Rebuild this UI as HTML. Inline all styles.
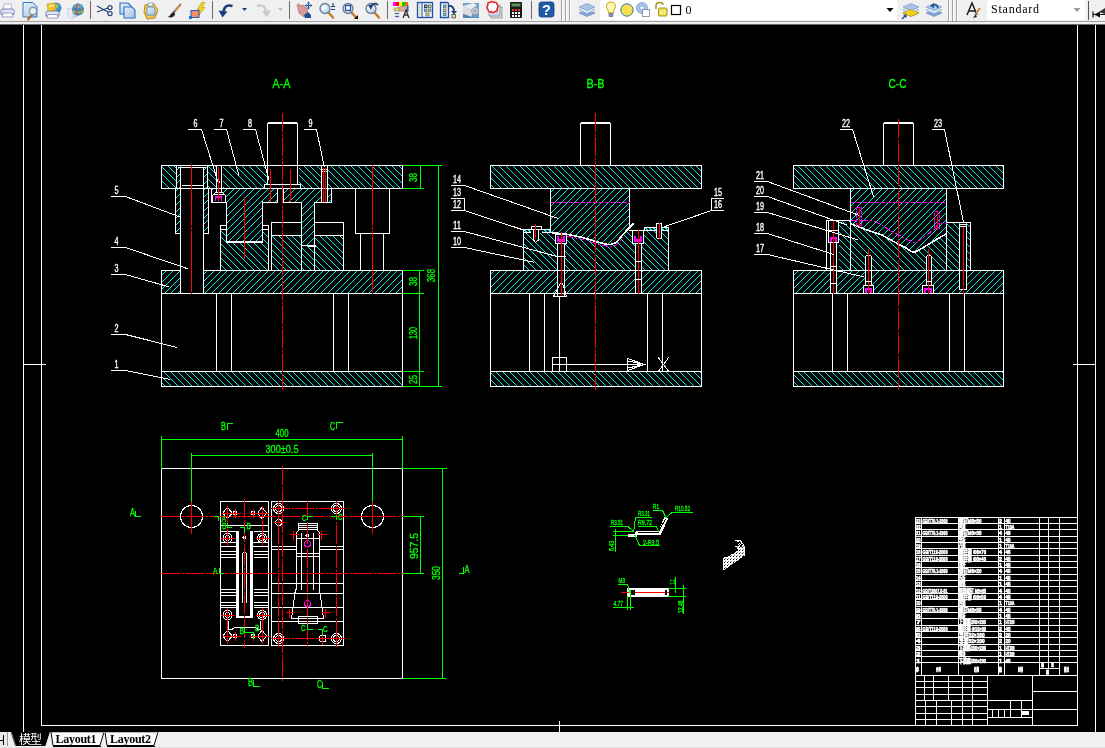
<!DOCTYPE html>
<html><head><meta charset="utf-8"><title>CAD</title>
<style>
html,body{margin:0;padding:0;background:#000;overflow:hidden}
body{width:1105px;height:748px;position:relative;font-family:"Liberation Sans","Noto Sans CJK SC",sans-serif}
#tb{position:absolute;left:0;top:0;width:1105px;height:25px;background:#f0f0f0;overflow:hidden}
#tb .l1{position:absolute;left:0;top:21px;width:1105px;height:1px;background:#a0a0a0}
#tb .l2{position:absolute;left:0;top:24px;width:1105px;height:1px;background:#6e6e6e}
#tb svg{position:absolute;left:0;top:0;will-change:transform}
#tabs{position:absolute;left:0;top:732px;width:1105px;height:16px;background:#f0f0f0;overflow:hidden}
#tabs svg{position:absolute;left:0;top:0;will-change:transform}
svg.cad{position:absolute;left:0;top:0;will-change:transform}
.cad path,.cad circle{fill:none;stroke-width:1;shape-rendering:crispEdges}
.cad .w{stroke:#fff}.cad .r{stroke:#f00}.cad .g{stroke:#0f0}.cad .c{stroke:#0ff;stroke-width:.92}.cad .m{stroke:#f0f}
.cad .w2{stroke:#fff;stroke-width:2}.cad .w15{stroke:#fff;stroke-width:1.6}
.cad .rd{stroke:#f00;stroke-dasharray:19 2 2 1}.cad .rp{stroke:#f00;stroke-dasharray:61 1 3 1}.cad .rs{stroke:#f00;stroke-dasharray:22 2 3 2}
.cad .md{stroke:#f0f;stroke-dasharray:6 2 2 2}.cad .mh{stroke:#f0f;stroke-dasharray:4 2}.cad .mp{stroke:#f0f;stroke-dasharray:3 1}
.cad text{font-family:"Liberation Sans",sans-serif}
.cad .tw{fill:#fff;stroke:#fff;stroke-width:.35}.cad .tg{fill:#0f0;stroke:#0f0;stroke-width:.35}
.cad .tb{font-weight:bold;stroke-width:.6;font-family:"Liberation Sans","Noto Sans CJK SC",sans-serif}
.ser{font-family:"Liberation Serif","Noto Serif CJK SC",serif}
</style></head>
<body>
<svg class="cad" width="1105" height="748" viewBox="0 0 1105 748"><defs><path id="hf" class="c" d="M-761.6 0l-748 748M-754.8 0l-748 748M-748 0l-748 748M-741.2 0l-748 748M-734.4 0l-748 748M-727.6 0l-748 748M-720.8 0l-748 748M-714 0l-748 748M-707.2 0l-748 748M-700.4 0l-748 748M-693.6 0l-748 748M-686.8 0l-748 748M-680 0l-748 748M-673.2 0l-748 748M-666.4 0l-748 748M-659.6 0l-748 748M-652.8 0l-748 748M-646 0l-748 748M-639.2 0l-748 748M-632.4 0l-748 748M-625.6 0l-748 748M-618.8 0l-748 748M-612 0l-748 748M-605.2 0l-748 748M-598.4 0l-748 748M-591.6 0l-748 748M-584.8 0l-748 748M-578 0l-748 748M-571.2 0l-748 748M-564.4 0l-748 748M-557.6 0l-748 748M-550.8 0l-748 748M-544 0l-748 748M-537.2 0l-748 748M-530.4 0l-748 748M-523.6 0l-748 748M-516.8 0l-748 748M-510 0l-748 748M-503.2 0l-748 748M-496.4 0l-748 748M-489.6 0l-748 748M-482.8 0l-748 748M-476 0l-748 748M-469.2 0l-748 748M-462.4 0l-748 748M-455.6 0l-748 748M-448.8 0l-748 748M-442 0l-748 748M-435.2 0l-748 748M-428.4 0l-748 748M-421.6 0l-748 748M-414.8 0l-748 748M-408 0l-748 748M-401.2 0l-748 748M-394.4 0l-748 748M-387.6 0l-748 748M-380.8 0l-748 748M-374 0l-748 748M-367.2 0l-748 748M-360.4 0l-748 748M-353.6 0l-748 748M-346.8 0l-748 748M-340 0l-748 748M-333.2 0l-748 748M-326.4 0l-748 748M-319.6 0l-748 748M-312.8 0l-748 748M-306 0l-748 748M-299.2 0l-748 748M-292.4 0l-748 748M-285.6 0l-748 748M-278.8 0l-748 748M-272 0l-748 748M-265.2 0l-748 748M-258.4 0l-748 748M-251.6 0l-748 748M-244.8 0l-748 748M-238 0l-748 748M-231.2 0l-748 748M-224.4 0l-748 748M-217.6 0l-748 748M-210.8 0l-748 748M-204 0l-748 748M-197.2 0l-748 748M-190.4 0l-748 748M-183.6 0l-748 748M-176.8 0l-748 748M-170 0l-748 748M-163.2 0l-748 748M-156.4 0l-748 748M-149.6 0l-748 748M-142.8 0l-748 748M-136 0l-748 748M-129.2 0l-748 748M-122.4 0l-748 748M-115.6 0l-748 748M-108.8 0l-748 748M-102 0l-748 748M-95.2 0l-748 748M-88.4 0l-748 748M-81.6 0l-748 748M-74.8 0l-748 748M-68 0l-748 748M-61.2 0l-748 748M-54.4 0l-748 748M-47.6 0l-748 748M-40.8 0l-748 748M-34 0l-748 748M-27.2 0l-748 748M-20.4 0l-748 748M-13.6 0l-748 748M-6.8 0l-748 748M-0 0l-748 748M6.8 0l-748 748M13.6 0l-748 748M20.4 0l-748 748M27.2 0l-748 748M34 0l-748 748M40.8 0l-748 748M47.6 0l-748 748M54.4 0l-748 748M61.2 0l-748 748M68 0l-748 748M74.8 0l-748 748M81.6 0l-748 748M88.4 0l-748 748M95.2 0l-748 748M102 0l-748 748M108.8 0l-748 748M115.6 0l-748 748M122.4 0l-748 748M129.2 0l-748 748M136 0l-748 748M142.8 0l-748 748M149.6 0l-748 748M156.4 0l-748 748M163.2 0l-748 748M170 0l-748 748M176.8 0l-748 748M183.6 0l-748 748M190.4 0l-748 748M197.2 0l-748 748M204 0l-748 748M210.8 0l-748 748M217.6 0l-748 748M224.4 0l-748 748M231.2 0l-748 748M238 0l-748 748M244.8 0l-748 748M251.6 0l-748 748M258.4 0l-748 748M265.2 0l-748 748M272 0l-748 748M278.8 0l-748 748M285.6 0l-748 748M292.4 0l-748 748M299.2 0l-748 748M306 0l-748 748M312.8 0l-748 748M319.6 0l-748 748M326.4 0l-748 748M333.2 0l-748 748M340 0l-748 748M346.8 0l-748 748M353.6 0l-748 748M360.4 0l-748 748M367.2 0l-748 748M374 0l-748 748M380.8 0l-748 748M387.6 0l-748 748M394.4 0l-748 748M401.2 0l-748 748M408 0l-748 748M414.8 0l-748 748M421.6 0l-748 748M428.4 0l-748 748M435.2 0l-748 748M442 0l-748 748M448.8 0l-748 748M455.6 0l-748 748M462.4 0l-748 748M469.2 0l-748 748M476 0l-748 748M482.8 0l-748 748M489.6 0l-748 748M496.4 0l-748 748M503.2 0l-748 748M510 0l-748 748M516.8 0l-748 748M523.6 0l-748 748M530.4 0l-748 748M537.2 0l-748 748M544 0l-748 748M550.8 0l-748 748M557.6 0l-748 748M564.4 0l-748 748M571.2 0l-748 748M578 0l-748 748M584.8 0l-748 748M591.6 0l-748 748M598.4 0l-748 748M605.2 0l-748 748M612 0l-748 748M618.8 0l-748 748M625.6 0l-748 748M632.4 0l-748 748M639.2 0l-748 748M646 0l-748 748M652.8 0l-748 748M659.6 0l-748 748M666.4 0l-748 748M673.2 0l-748 748M680 0l-748 748M686.8 0l-748 748M693.6 0l-748 748M700.4 0l-748 748M707.2 0l-748 748M714 0l-748 748M720.8 0l-748 748M727.6 0l-748 748M734.4 0l-748 748M741.2 0l-748 748M748 0l-748 748M754.8 0l-748 748M761.6 0l-748 748M768.4 0l-748 748M775.2 0l-748 748M782 0l-748 748M788.8 0l-748 748M795.6 0l-748 748M802.4 0l-748 748M809.2 0l-748 748M816 0l-748 748M822.8 0l-748 748M829.6 0l-748 748M836.4 0l-748 748M843.2 0l-748 748M850 0l-748 748M856.8 0l-748 748M863.6 0l-748 748M870.4 0l-748 748M877.2 0l-748 748M884 0l-748 748M890.8 0l-748 748M897.6 0l-748 748M904.4 0l-748 748M911.2 0l-748 748M918 0l-748 748M924.8 0l-748 748M931.6 0l-748 748M938.4 0l-748 748M945.2 0l-748 748M952 0l-748 748M958.8 0l-748 748M965.6 0l-748 748M972.4 0l-748 748M979.2 0l-748 748M986 0l-748 748M992.8 0l-748 748M999.6 0l-748 748M1006.4 0l-748 748M1013.2 0l-748 748M1020 0l-748 748M1026.8 0l-748 748M1033.6 0l-748 748M1040.4 0l-748 748M1047.2 0l-748 748M1054 0l-748 748M1060.8 0l-748 748M1067.6 0l-748 748M1074.4 0l-748 748M1081.2 0l-748 748M1088 0l-748 748M1094.8 0l-748 748M1101.6 0l-748 748M1108.4 0l-748 748M1115.2 0l-748 748M1122 0l-748 748M1128.8 0l-748 748M1135.6 0l-748 748M1142.4 0l-748 748M1149.2 0l-748 748M1156 0l-748 748M1162.8 0l-748 748M1169.6 0l-748 748M1176.4 0l-748 748M1183.2 0l-748 748M1190 0l-748 748M1196.8 0l-748 748M1203.6 0l-748 748M1210.4 0l-748 748M1217.2 0l-748 748M1224 0l-748 748M1230.8 0l-748 748M1237.6 0l-748 748M1244.4 0l-748 748M1251.2 0l-748 748M1258 0l-748 748M1264.8 0l-748 748M1271.6 0l-748 748M1278.4 0l-748 748M1285.2 0l-748 748M1292 0l-748 748M1298.8 0l-748 748M1305.6 0l-748 748M1312.4 0l-748 748M1319.2 0l-748 748M1326 0l-748 748M1332.8 0l-748 748M1339.6 0l-748 748M1346.4 0l-748 748M1353.2 0l-748 748M1360 0l-748 748M1366.8 0l-748 748M1373.6 0l-748 748M1380.4 0l-748 748M1387.2 0l-748 748M1394 0l-748 748M1400.8 0l-748 748M1407.6 0l-748 748M1414.4 0l-748 748M1421.2 0l-748 748M1428 0l-748 748M1434.8 0l-748 748M1441.6 0l-748 748M1448.4 0l-748 748M1455.2 0l-748 748M1462 0l-748 748M1468.8 0l-748 748M1475.6 0l-748 748M1482.4 0l-748 748M1489.2 0l-748 748M1496 0l-748 748M1502.8 0l-748 748M1509.6 0l-748 748M1516.4 0l-748 748M1523.2 0l-748 748M1530 0l-748 748M1536.8 0l-748 748M1543.6 0l-748 748M1550.4 0l-748 748M1557.2 0l-748 748M1564 0l-748 748M1570.8 0l-748 748M1577.6 0l-748 748M1584.4 0l-748 748M1591.2 0l-748 748M1598 0l-748 748M1604.8 0l-748 748M1611.6 0l-748 748M1618.4 0l-748 748M1625.2 0l-748 748M1632 0l-748 748M1638.8 0l-748 748M1645.6 0l-748 748M1652.4 0l-748 748M1659.2 0l-748 748M1666 0l-748 748M1672.8 0l-748 748M1679.6 0l-748 748M1686.4 0l-748 748M1693.2 0l-748 748M1700 0l-748 748M1706.8 0l-748 748M1713.6 0l-748 748M1720.4 0l-748 748M1727.2 0l-748 748M1734 0l-748 748M1740.8 0l-748 748M1747.6 0l-748 748M1754.4 0l-748 748M1761.2 0l-748 748M1768 0l-748 748M1774.8 0l-748 748M1781.6 0l-748 748M1788.4 0l-748 748M1795.2 0l-748 748M1802 0l-748 748M1808.8 0l-748 748M1815.6 0l-748 748M1822.4 0l-748 748M1829.2 0l-748 748M1836 0l-748 748M1842.8 0l-748 748M1849.6 0l-748 748M1856.4 0l-748 748"/><path id="hb" class="c" d="M-1509.6 0l748 748M-1502.8 0l748 748M-1496 0l748 748M-1489.2 0l748 748M-1482.4 0l748 748M-1475.6 0l748 748M-1468.8 0l748 748M-1462 0l748 748M-1455.2 0l748 748M-1448.4 0l748 748M-1441.6 0l748 748M-1434.8 0l748 748M-1428 0l748 748M-1421.2 0l748 748M-1414.4 0l748 748M-1407.6 0l748 748M-1400.8 0l748 748M-1394 0l748 748M-1387.2 0l748 748M-1380.4 0l748 748M-1373.6 0l748 748M-1366.8 0l748 748M-1360 0l748 748M-1353.2 0l748 748M-1346.4 0l748 748M-1339.6 0l748 748M-1332.8 0l748 748M-1326 0l748 748M-1319.2 0l748 748M-1312.4 0l748 748M-1305.6 0l748 748M-1298.8 0l748 748M-1292 0l748 748M-1285.2 0l748 748M-1278.4 0l748 748M-1271.6 0l748 748M-1264.8 0l748 748M-1258 0l748 748M-1251.2 0l748 748M-1244.4 0l748 748M-1237.6 0l748 748M-1230.8 0l748 748M-1224 0l748 748M-1217.2 0l748 748M-1210.4 0l748 748M-1203.6 0l748 748M-1196.8 0l748 748M-1190 0l748 748M-1183.2 0l748 748M-1176.4 0l748 748M-1169.6 0l748 748M-1162.8 0l748 748M-1156 0l748 748M-1149.2 0l748 748M-1142.4 0l748 748M-1135.6 0l748 748M-1128.8 0l748 748M-1122 0l748 748M-1115.2 0l748 748M-1108.4 0l748 748M-1101.6 0l748 748M-1094.8 0l748 748M-1088 0l748 748M-1081.2 0l748 748M-1074.4 0l748 748M-1067.6 0l748 748M-1060.8 0l748 748M-1054 0l748 748M-1047.2 0l748 748M-1040.4 0l748 748M-1033.6 0l748 748M-1026.8 0l748 748M-1020 0l748 748M-1013.2 0l748 748M-1006.4 0l748 748M-999.6 0l748 748M-992.8 0l748 748M-986 0l748 748M-979.2 0l748 748M-972.4 0l748 748M-965.6 0l748 748M-958.8 0l748 748M-952 0l748 748M-945.2 0l748 748M-938.4 0l748 748M-931.6 0l748 748M-924.8 0l748 748M-918 0l748 748M-911.2 0l748 748M-904.4 0l748 748M-897.6 0l748 748M-890.8 0l748 748M-884 0l748 748M-877.2 0l748 748M-870.4 0l748 748M-863.6 0l748 748M-856.8 0l748 748M-850 0l748 748M-843.2 0l748 748M-836.4 0l748 748M-829.6 0l748 748M-822.8 0l748 748M-816 0l748 748M-809.2 0l748 748M-802.4 0l748 748M-795.6 0l748 748M-788.8 0l748 748M-782 0l748 748M-775.2 0l748 748M-768.4 0l748 748M-761.6 0l748 748M-754.8 0l748 748M-748 0l748 748M-741.2 0l748 748M-734.4 0l748 748M-727.6 0l748 748M-720.8 0l748 748M-714 0l748 748M-707.2 0l748 748M-700.4 0l748 748M-693.6 0l748 748M-686.8 0l748 748M-680 0l748 748M-673.2 0l748 748M-666.4 0l748 748M-659.6 0l748 748M-652.8 0l748 748M-646 0l748 748M-639.2 0l748 748M-632.4 0l748 748M-625.6 0l748 748M-618.8 0l748 748M-612 0l748 748M-605.2 0l748 748M-598.4 0l748 748M-591.6 0l748 748M-584.8 0l748 748M-578 0l748 748M-571.2 0l748 748M-564.4 0l748 748M-557.6 0l748 748M-550.8 0l748 748M-544 0l748 748M-537.2 0l748 748M-530.4 0l748 748M-523.6 0l748 748M-516.8 0l748 748M-510 0l748 748M-503.2 0l748 748M-496.4 0l748 748M-489.6 0l748 748M-482.8 0l748 748M-476 0l748 748M-469.2 0l748 748M-462.4 0l748 748M-455.6 0l748 748M-448.8 0l748 748M-442 0l748 748M-435.2 0l748 748M-428.4 0l748 748M-421.6 0l748 748M-414.8 0l748 748M-408 0l748 748M-401.2 0l748 748M-394.4 0l748 748M-387.6 0l748 748M-380.8 0l748 748M-374 0l748 748M-367.2 0l748 748M-360.4 0l748 748M-353.6 0l748 748M-346.8 0l748 748M-340 0l748 748M-333.2 0l748 748M-326.4 0l748 748M-319.6 0l748 748M-312.8 0l748 748M-306 0l748 748M-299.2 0l748 748M-292.4 0l748 748M-285.6 0l748 748M-278.8 0l748 748M-272 0l748 748M-265.2 0l748 748M-258.4 0l748 748M-251.6 0l748 748M-244.8 0l748 748M-238 0l748 748M-231.2 0l748 748M-224.4 0l748 748M-217.6 0l748 748M-210.8 0l748 748M-204 0l748 748M-197.2 0l748 748M-190.4 0l748 748M-183.6 0l748 748M-176.8 0l748 748M-170 0l748 748M-163.2 0l748 748M-156.4 0l748 748M-149.6 0l748 748M-142.8 0l748 748M-136 0l748 748M-129.2 0l748 748M-122.4 0l748 748M-115.6 0l748 748M-108.8 0l748 748M-102 0l748 748M-95.2 0l748 748M-88.4 0l748 748M-81.6 0l748 748M-74.8 0l748 748M-68 0l748 748M-61.2 0l748 748M-54.4 0l748 748M-47.6 0l748 748M-40.8 0l748 748M-34 0l748 748M-27.2 0l748 748M-20.4 0l748 748M-13.6 0l748 748M-6.8 0l748 748M-0 0l748 748M6.8 0l748 748M13.6 0l748 748M20.4 0l748 748M27.2 0l748 748M34 0l748 748M40.8 0l748 748M47.6 0l748 748M54.4 0l748 748M61.2 0l748 748M68 0l748 748M74.8 0l748 748M81.6 0l748 748M88.4 0l748 748M95.2 0l748 748M102 0l748 748M108.8 0l748 748M115.6 0l748 748M122.4 0l748 748M129.2 0l748 748M136 0l748 748M142.8 0l748 748M149.6 0l748 748M156.4 0l748 748M163.2 0l748 748M170 0l748 748M176.8 0l748 748M183.6 0l748 748M190.4 0l748 748M197.2 0l748 748M204 0l748 748M210.8 0l748 748M217.6 0l748 748M224.4 0l748 748M231.2 0l748 748M238 0l748 748M244.8 0l748 748M251.6 0l748 748M258.4 0l748 748M265.2 0l748 748M272 0l748 748M278.8 0l748 748M285.6 0l748 748M292.4 0l748 748M299.2 0l748 748M306 0l748 748M312.8 0l748 748M319.6 0l748 748M326.4 0l748 748M333.2 0l748 748M340 0l748 748M346.8 0l748 748M353.6 0l748 748M360.4 0l748 748M367.2 0l748 748M374 0l748 748M380.8 0l748 748M387.6 0l748 748M394.4 0l748 748M401.2 0l748 748M408 0l748 748M414.8 0l748 748M421.6 0l748 748M428.4 0l748 748M435.2 0l748 748M442 0l748 748M448.8 0l748 748M455.6 0l748 748M462.4 0l748 748M469.2 0l748 748M476 0l748 748M482.8 0l748 748M489.6 0l748 748M496.4 0l748 748M503.2 0l748 748M510 0l748 748M516.8 0l748 748M523.6 0l748 748M530.4 0l748 748M537.2 0l748 748M544 0l748 748M550.8 0l748 748M557.6 0l748 748M564.4 0l748 748M571.2 0l748 748M578 0l748 748M584.8 0l748 748M591.6 0l748 748M598.4 0l748 748M605.2 0l748 748M612 0l748 748M618.8 0l748 748M625.6 0l748 748M632.4 0l748 748M639.2 0l748 748M646 0l748 748M652.8 0l748 748M659.6 0l748 748M666.4 0l748 748M673.2 0l748 748M680 0l748 748M686.8 0l748 748M693.6 0l748 748M700.4 0l748 748M707.2 0l748 748M714 0l748 748M720.8 0l748 748M727.6 0l748 748M734.4 0l748 748M741.2 0l748 748M748 0l748 748M754.8 0l748 748M761.6 0l748 748M768.4 0l748 748M775.2 0l748 748M782 0l748 748M788.8 0l748 748M795.6 0l748 748M802.4 0l748 748M809.2 0l748 748M816 0l748 748M822.8 0l748 748M829.6 0l748 748M836.4 0l748 748M843.2 0l748 748M850 0l748 748M856.8 0l748 748M863.6 0l748 748M870.4 0l748 748M877.2 0l748 748M884 0l748 748M890.8 0l748 748M897.6 0l748 748M904.4 0l748 748M911.2 0l748 748M918 0l748 748M924.8 0l748 748M931.6 0l748 748M938.4 0l748 748M945.2 0l748 748M952 0l748 748M958.8 0l748 748M965.6 0l748 748M972.4 0l748 748M979.2 0l748 748M986 0l748 748M992.8 0l748 748M999.6 0l748 748M1006.4 0l748 748M1013.2 0l748 748M1020 0l748 748M1026.8 0l748 748M1033.6 0l748 748M1040.4 0l748 748M1047.2 0l748 748M1054 0l748 748M1060.8 0l748 748M1067.6 0l748 748M1074.4 0l748 748M1081.2 0l748 748M1088 0l748 748M1094.8 0l748 748M1101.6 0l748 748M1108.4 0l748 748"/><clipPath id="c1"><path d="M161 165L403 165L403 189L161 189Z"/></clipPath><clipPath id="c2"><path d="M161 270L403 270L403 294L161 294Z"/></clipPath><clipPath id="c3"><path d="M161 371L403 371L403 387L161 387Z"/></clipPath><clipPath id="c4"><path d="M175 189L181 189L181 234L175 234Z"/></clipPath><clipPath id="c5"><path d="M204 189L208 189L208 234L204 234Z"/></clipPath><clipPath id="c6"><path d="M177 166L181 166L181 189L177 189Z"/></clipPath><clipPath id="c7"><path d="M204 166L208 166L208 189L204 189Z"/></clipPath><clipPath id="c8"><path d="M211 189L278 189L278 202L262 202L262 242L227 242L227 203L211 203Z"/></clipPath><clipPath id="c9"><path d="M283 189L331 189L331 202L315 202L315 245L301 245L301 202L283 202Z"/></clipPath><clipPath id="c10"><path d="M301 246L315 246L315 270L301 270Z"/></clipPath><clipPath id="c11"><path d="M272 236L301 236L301 270L272 270Z"/></clipPath><clipPath id="c12"><path d="M315 236L344 236L344 270L315 270Z"/></clipPath><clipPath id="c13"><path d="M220 229L227 229L227 242L262 242L262 229L269 229L269 270L220 270Z"/></clipPath><clipPath id="c14"><path d="M490 165L702 165L702 189L490 189Z"/></clipPath><clipPath id="c15"><path d="M490 270L702 270L702 294L490 294Z"/></clipPath><clipPath id="c16"><path d="M490 371L702 371L702 387L490 387Z"/></clipPath><clipPath id="c17"><path d="M550.5 189L630 189L630 227L627 230L621.8 236L618 240.5L615 243.2L611 244.3L607 244.3L596.7 241.8L590.4 239.8L580 236.8L567 234.3L550.5 232.5Z"/></clipPath><clipPath id="c18"><path d="M523.5 232.5L550.5 232.5L567 234.3L580 236.8L590.4 239.8L596.7 241.8L607 244.3L611 244.3L615 243.2L618 240.5L621.8 236L627 230L630 230.5L669 230.5L669 270L523.5 270Z"/></clipPath><clipPath id="c19"><path d="M793 165L1004 165L1004 189L793 189Z"/></clipPath><clipPath id="c20"><path d="M793 270L1004 270L1004 294L793 294Z"/></clipPath><clipPath id="c21"><path d="M793 371L1004 371L1004 387L793 387Z"/></clipPath><clipPath id="c22"><path d="M850.5 189L947 189L947 233.5L938 238.5L930 243.5L920.1 249.4L915 252.2L911 251.5L906 248L898.8 244.3L890 239.5L882 235.1L875 232.5L867 230.1L858 226.5L851 223.8L850.5 223.8Z"/></clipPath><clipPath id="c23"><path d="M839 220.5L850.5 220.5L851 223.8L858 226.5L867 230.1L875 232.5L882 235.1L890 239.5L898.8 244.3L906 248L911 251.5L915 252.2L920.1 249.4L930 243.5L938 238.5L947 233.5L947 222.5L970.5 222.5L970.5 270L839 270Z"/></clipPath><clipPath id="ciso"><path d="M723 558.3L723 569.5L724 570L744.6 555.6L744.6 546L741 540L735 540L739.7 546.2L735 546.5L738.5 550L727.4 557.1L724 557Z"/></clipPath><pattern id="dots" width="3" height="3" patternUnits="userSpaceOnUse"><rect x="1" y="1" width="1" height="1" fill="#000"/><rect x="2.5" y="0" width=".5" height="1" fill="#000"/></pattern></defs>
<path class="w" d="M23.5 25L23.5 732"/>
<path class="w" d="M41.5 25L41.5 726"/>
<path class="w" d="M1077.5 25L1077.5 726"/>
<path class="w" d="M1095.5 25L1095.5 732"/>
<path class="w" d="M41 725.5L1078 725.5"/>
<path class="w" d="M23 364.5L46 364.5"/>
<path class="w" d="M1073 364.5L1096 364.5"/>
<path class="w" d="M559.5 721L559.5 732"/>
<g clip-path="url(#c1)"><use href="#hb" transform="translate(1.5 0)"/></g>
<g clip-path="url(#c2)"><use href="#hf" transform="translate(2 0)"/></g>
<g clip-path="url(#c3)"><use href="#hb" transform="translate(3 0)"/></g>
<rect x="177" y="166" width="31" height="23" fill="#000"/>
<rect x="216" y="166" width="7" height="23" fill="#000"/>
<rect x="267" y="166" width="32" height="19" fill="#000"/>
<rect x="264" y="184" width="37" height="5" fill="#000"/>
<rect x="321" y="166" width="7" height="23" fill="#000"/>
<g clip-path="url(#c4)"><use href="#hf"/></g>
<g clip-path="url(#c5)"><use href="#hf"/></g>
<g clip-path="url(#c6)"><use href="#hf"/></g>
<g clip-path="url(#c7)"><use href="#hf"/></g>
<rect x="181" y="270" width="23" height="24" fill="#000"/>
<g clip-path="url(#c8)"><use href="#hf" transform="translate(1 0)"/></g>
<rect x="212" y="193" width="14" height="10" fill="#000"/>
<rect x="215" y="189" width="8" height="5" fill="#000"/>
<g clip-path="url(#c9)"><use href="#hf" transform="translate(1 0)"/></g>
<rect x="321" y="189" width="7" height="13" fill="#000"/>
<g clip-path="url(#c10)"><use href="#hb"/></g>
<g clip-path="url(#c11)"><use href="#hb" transform="translate(2 0)"/></g>
<g clip-path="url(#c12)"><use href="#hb" transform="translate(2 0)"/></g>
<g clip-path="url(#c13)"><use href="#hb" transform="translate(4 0)"/></g>
<path class="w" d="M161.5 165.5H402.5V188.5H161.5Z"/>
<path class="w" d="M180.5 270.5L161.5 270.5L161.5 293.5L402.5 293.5L402.5 270.5L203.5 270.5"/>
<path class="w" d="M161.5 293.5H402.5V386.5H161.5Z"/>
<path class="w" d="M161 371.5L403 371.5"/>
<path class="w" d="M216.5 293L216.5 372"/>
<path class="w" d="M231.5 293L231.5 372"/>
<path class="w" d="M333.5 293L333.5 372"/>
<path class="w" d="M348.5 293L348.5 372"/>
<path class="w" d="M267.5 165L267.5 123.5L268.5 122.5L296.5 122.5L297.5 123.5L297.5 184"/>
<path class="w" d="M268 123.5L298 123.5"/>
<path class="w" d="M267.5 165L267.5 185"/>
<path class="w" d="M297.5 165L297.5 185"/>
<path class="w" d="M264.5 184.5H300.5V188.5H264.5Z"/>
<path class="w" d="M176.5 166L176.5 189"/>
<path class="w" d="M207.5 166L207.5 189"/>
<path class="w" d="M178 167.5L206 167.5"/>
<path class="w" d="M175.5 188L175.5 233.5L180.5 233.5"/>
<path class="w" d="M208.5 188L208.5 233.5L203.5 233.5"/>
<path class="w" d="M180.5 167L180.5 293"/>
<path class="w" d="M203.5 167L203.5 293"/>
<path class="w" d="M182 185.5L203 185.5"/>
<path class="w" d="M161 188.5L177 188.5"/>
<path class="w" d="M216.5 166L216.5 193"/>
<path class="w" d="M221.5 166L221.5 193"/>
<path class="w" d="M212.5 202.5L212.5 195.5L215.5 192.5L222.5 192.5L225.5 195.5L225.5 202.5L212.5 202.5"/>
<path class="w" d="M214 194.5L224 194.5"/>
<path class="w" d="M211.5 188L211.5 203"/>
<path class="w" d="M218.5 181.5H219.5V182.5H218.5Z"/>
<rect x="215" y="196" width="7" height="5" fill="#f0f"/>
<rect x="216" y="198" width="2" height="3" fill="#000"/>
<rect x="219" y="198" width="2" height="3" fill="#000"/>
<path class="w" d="M226.5 202L226.5 241.5L262.5 241.5L262.5 202L277.5 202.5L277.5 188"/>
<path class="w" d="M226 242.5L263 242.5"/>
<path class="w" d="M283.5 188L283.5 202.5L301.5 202.5L301.5 270"/>
<path class="w" d="M331.5 188L331.5 202.5L314.5 202.5L314.5 270"/>
<path class="w" d="M301 245.5L316 245.5"/>
<path class="w" d="M308 246.5L316 246.5"/>
<path class="w" d="M321.5 166L321.5 202"/>
<path class="w" d="M327.5 166L327.5 202"/>
<path class="w" d="M321.5 169.5H327.5V171.5H321.5Z"/>
<path class="w" d="M321 202.5L332 202.5"/>
<path class="w" d="M271.5 222.5H301.5V235.5H271.5Z"/>
<path class="w" d="M271.5 235L271.5 271"/>
<path class="w" d="M314.5 222.5H343.5V235.5H314.5Z"/>
<path class="w" d="M343.5 235L343.5 271"/>
<path class="w" d="M220.5 270L220.5 225.5L226.5 225.5"/>
<path class="w" d="M262.5 225.5L268.5 225.5L268.5 270"/>
<path class="w" d="M220 229.5L227 229.5"/>
<path class="w" d="M262 229.5L269 229.5"/>
<path class="w" d="M355.5 188.5H389.5V233.5H355.5Z"/>
<path class="w" d="M360.5 233L360.5 271"/>
<path class="w" d="M383.5 233L383.5 271"/>
<path class="rd" d="M282.5 113L282.5 390"/>
<path class="rp" d="M191.5 165L191.5 294"/>
<path class="r" d="M218.5 167L218.5 200"/>
<path class="r" d="M244.5 197L244.5 259"/>
<path class="r" d="M270.5 169L270.5 202"/>
<path class="r" d="M290.5 169L290.5 202"/>
<path class="r" d="M323.5 168L323.5 202"/>
<path class="r" d="M325.5 168L325.5 202"/>
<path class="rp" d="M372.5 165L372.5 294"/>
<path class="g" d="M403 165.5L442 165.5"/>
<path class="g" d="M403 188.5L424 188.5"/>
<path class="g" d="M403 270.5L424 270.5"/>
<path class="g" d="M403 293.5L424 293.5"/>
<path class="g" d="M403 371.5L424 371.5"/>
<path class="g" d="M403 386.5L442 386.5"/>
<path class="g" d="M420.5 165L420.5 189"/>
<path class="g" d="M419.5 270L419.5 387"/>
<path class="g" d="M438.5 165L438.5 387"/>
<text class="tg" x="417" y="182" font-size="11" textLength="9" lengthAdjust="spacingAndGlyphs" transform="rotate(-90 417 182)">38</text>
<text class="tg" x="417" y="286" font-size="11" textLength="9" lengthAdjust="spacingAndGlyphs" transform="rotate(-90 417 286)">38</text>
<text class="tg" x="417" y="339" font-size="11" textLength="12" lengthAdjust="spacingAndGlyphs" transform="rotate(-90 417 339)">130</text>
<text class="tg" x="417" y="384" font-size="11" textLength="9" lengthAdjust="spacingAndGlyphs" transform="rotate(-90 417 384)">25</text>
<text class="tg" x="435" y="282" font-size="11" textLength="13" lengthAdjust="spacingAndGlyphs" transform="rotate(-90 435 282)">368</text>
<text class="tg" x="272.5" y="88" font-size="13" textLength="18" lengthAdjust="spacingAndGlyphs">A-A</text>
<text class="tw" x="193.5" y="127" font-size="10" textLength="4" lengthAdjust="spacingAndGlyphs">6</text>
<path class="w" d="M188 129.5L202 129.5"/>
<path class="w" d="M201.5 129.5L218 182"/>
<text class="tw" x="219.5" y="127" font-size="10" textLength="4" lengthAdjust="spacingAndGlyphs">7</text>
<path class="w" d="M214 129.5L227 129.5"/>
<path class="w" d="M226.5 129.5L239 176"/>
<text class="tw" x="248" y="127" font-size="10" textLength="4" lengthAdjust="spacingAndGlyphs">8</text>
<path class="w" d="M243 129.5L256 129.5"/>
<path class="w" d="M255.5 129.5L269 180"/>
<text class="tw" x="308.5" y="127" font-size="10" textLength="4" lengthAdjust="spacingAndGlyphs">9</text>
<path class="w" d="M304 129.5L317 129.5"/>
<path class="w" d="M316.5 129.5L324.3 166.8"/>
<text class="tw" x="114.5" y="194" font-size="10" textLength="4" lengthAdjust="spacingAndGlyphs">5</text>
<path class="w" d="M111 196.5L126 196.5"/>
<path class="w" d="M125.5 196.5L180.2 217.1"/>
<text class="tw" x="114.5" y="245" font-size="10" textLength="4" lengthAdjust="spacingAndGlyphs">4</text>
<path class="w" d="M111 247.5L126 247.5"/>
<path class="w" d="M125.5 247.5L188.2 268.9"/>
<text class="tw" x="114.5" y="272" font-size="10" textLength="4" lengthAdjust="spacingAndGlyphs">3</text>
<path class="w" d="M111 274.5L126 274.5"/>
<path class="w" d="M125.5 274.5L168.5 286.7"/>
<text class="tw" x="114.5" y="332" font-size="10" textLength="4" lengthAdjust="spacingAndGlyphs">2</text>
<path class="w" d="M111 334.5L126 334.5"/>
<path class="w" d="M125.5 334.5L176.9 347.4"/>
<text class="tw" x="114.5" y="368" font-size="10" textLength="4" lengthAdjust="spacingAndGlyphs">1</text>
<path class="w" d="M111 370.5L126 370.5"/>
<path class="w" d="M125.5 370.5L170.2 379.5"/>
<g clip-path="url(#c14)"><use href="#hb"/></g>
<g clip-path="url(#c15)"><use href="#hf" transform="translate(3 0)"/></g>
<g clip-path="url(#c16)"><use href="#hb" transform="translate(2 0)"/></g>
<g clip-path="url(#c17)"><use href="#hf" transform="translate(2 0)"/></g>
<g clip-path="url(#c18)"><use href="#hb" transform="translate(1 0)"/></g>
<rect x="556" y="235" width="11" height="9" fill="#000"/>
<rect x="558" y="243" width="7" height="51" fill="#000"/>
<rect x="633" y="231" width="11" height="13" fill="#000"/>
<rect x="636" y="243" width="6" height="51" fill="#000"/>
<rect x="534" y="231" width="5" height="11" fill="#000"/>
<rect x="657" y="231" width="5" height="8" fill="#000"/>
<path class="w" d="M490.5 165.5H701.5V188.5H490.5Z"/>
<path class="w" d="M490.5 270.5H701.5V293.5H490.5Z"/>
<path class="w" d="M490.5 293.5H701.5V386.5H490.5Z"/>
<path class="w" d="M490 371.5L702 371.5"/>
<path class="w" d="M529.5 293L529.5 372"/>
<path class="w" d="M544.5 293L544.5 372"/>
<path class="w" d="M647.5 293L647.5 372"/>
<path class="w" d="M662.5 293L662.5 372"/>
<path class="w" d="M580.5 165L580.5 123.5L581.5 122.5L609.5 122.5L610.5 123.5L610.5 165"/>
<path class="w" d="M581 123.5L611 123.5"/>
<path class="w" d="M550.5 188L550.5 233"/>
<path class="w" d="M629.5 188L629.5 226"/>
<path class="w" d="M523.5 229L523.5 271"/>
<path class="w" d="M668.5 227L668.5 271"/>
<path class="w" d="M523.5 229.5H550.5V232.5H523.5Z"/>
<path class="w" d="M644.5 227.5H668.5V230.5H644.5Z"/>
<path class="w" d="M629 230.5L645 230.5"/>
<path class="c" d="M524 230.5L550 230.5" stroke-dasharray="2 2"/>
<path class="c" d="M525 231.5L550 231.5" stroke-dasharray="2 2"/>
<path class="c" d="M645 228.5L668 228.5" stroke-dasharray="2 2"/>
<path class="c" d="M646 229.5L668 229.5" stroke-dasharray="2 2"/>
<path class="w15" d="M550.5 232.5L567 234.3L580 236.8L590.4 239.8L596.7 241.8L607 244.3L611 244.3L615 243.2L618 240.5L621.8 236L627 230L633.5 223.5"/>
<path class="mh" d="M551 202.5L630 202.5"/>
<path class="md" d="M567 236.3L580 238.8L590.4 241.8L596.7 243.8L607 246.3L611 246.3L616 245L620 241L623 237.5"/>
<path class="w" d="M555.5 234.5H566.5V243.5H555.5Z"/>
<rect x="557" y="236" width="8" height="6" fill="#f0f"/>
<rect x="559" y="236" width="4" height="3" fill="#000"/>
<path class="w" d="M557.5 243L557.5 296"/>
<path class="w" d="M564.5 243L564.5 296"/>
<path class="r" d="M561.5 232L561.5 296"/>
<path class="w" d="M560.5 283L553.5 296.5L566.5 296.5L562.5 283"/>
<path class="w" d="M559.5 296L559.5 358"/>
<path class="w" d="M557 256.5L566 256.5"/>
<path class="w" d="M632.5 230.5H643.5V243.5H632.5Z"/>
<rect x="634" y="236" width="8" height="6" fill="#f0f"/>
<rect x="636" y="236" width="4" height="3" fill="#000"/>
<path class="w" d="M635.5 243L635.5 294"/>
<path class="w" d="M641.5 243L641.5 294"/>
<path class="r" d="M638.5 230L638.5 294"/>
<path class="w" d="M635 261.5L642 261.5"/>
<path class="w" d="M635 279.5L642 279.5"/>
<rect x="531" y="226" width="11" height="7" fill="#000"/>
<path class="w" d="M531.5 226.5H541.5V229.5H531.5Z"/>
<path class="w" d="M533.5 229L533.5 240L535.5 242.5L538.5 240L538.5 229"/>
<path class="r" d="M535.5 224L535.5 239"/>
<rect x="656" y="223" width="6" height="16" fill="#000"/>
<path class="w" d="M656.5 238L656.5 223.5L661.5 223.5L661.5 238.5L656.5 238.5"/>
<path class="r" d="M659.5 223L659.5 239"/>
<path class="w" d="M552.5 357.5H566.5V371.5H552.5Z"/>
<path class="w" d="M552 364.5L641 364.5"/>
<path class="w" d="M559.5 357L559.5 372"/>
<path class="w" d="M627.5 358.5L644.5 364.5L627.5 370.5L627.5 358.5"/>
<path class="w" d="M628 361L644 364.5"/>
<path class="w" d="M628 368L644 364.5"/>
<path class="w" d="M658 357L669 372"/>
<path class="w" d="M669 357L658 372"/>
<path class="rd" d="M595.5 113L595.5 390"/>
<text class="tg" x="586.5" y="88" font-size="13" textLength="18" lengthAdjust="spacingAndGlyphs">B-B</text>
<text class="tw" x="453" y="183" font-size="10" textLength="8" lengthAdjust="spacingAndGlyphs">14</text>
<path class="w" d="M451 185.5L465 185.5"/>
<path class="w" d="M464.5 185.5L557.8 218.3"/>
<text class="tw" x="453" y="196" font-size="10" textLength="8" lengthAdjust="spacingAndGlyphs">13</text>
<path class="w" d="M451 198.5L465 198.5"/>
<path class="w" d="M464.5 198L464.5 211"/>
<text class="tw" x="453" y="208" font-size="10" textLength="8" lengthAdjust="spacingAndGlyphs">12</text>
<path class="w" d="M451 210.5L465 210.5"/>
<path class="w" d="M464.5 210.5L523.5 230"/>
<text class="tw" x="453" y="229" font-size="10" textLength="8" lengthAdjust="spacingAndGlyphs">11</text>
<path class="w" d="M451 231.5L465 231.5"/>
<path class="w" d="M464.5 231.5L558.6 256.9"/>
<text class="tw" x="453" y="245" font-size="10" textLength="8" lengthAdjust="spacingAndGlyphs">10</text>
<path class="w" d="M451 247.5L465 247.5"/>
<path class="w" d="M464.5 247.5L533.6 262.2"/>
<text class="tw" x="714" y="196" font-size="10" textLength="8" lengthAdjust="spacingAndGlyphs">15</text>
<path class="w" d="M711 198.5L724 198.5"/>
<path class="w" d="M711.5 198L711.5 211"/>
<text class="tw" x="714" y="208" font-size="10" textLength="8" lengthAdjust="spacingAndGlyphs">16</text>
<path class="w" d="M711 210.5L724 210.5"/>
<path class="w" d="M711.5 210.5L661.9 227.6"/>
<g clip-path="url(#c19)"><use href="#hb"/></g>
<g clip-path="url(#c20)"><use href="#hf" transform="translate(1 0)"/></g>
<g clip-path="url(#c21)"><use href="#hb" transform="translate(4 0)"/></g>
<g clip-path="url(#c22)"><use href="#hf" transform="translate(3 0)"/></g>
<g clip-path="url(#c23)"><use href="#hb" transform="translate(2 0)"/></g>
<rect x="960" y="225" width="7" height="46" fill="#000"/>
<rect x="960" y="270" width="7" height="20" fill="#000"/>
<rect x="831" y="270" width="6" height="24" fill="#000"/>
<rect x="866" y="255" width="6" height="32" fill="#000"/>
<rect x="864" y="286" width="10" height="8" fill="#000"/>
<rect x="926" y="255" width="6" height="32" fill="#000"/>
<rect x="923" y="286" width="11" height="8" fill="#000"/>
<path class="w" d="M793.5 165.5H1003.5V188.5H793.5Z"/>
<path class="w" d="M793.5 270.5H1003.5V293.5H793.5Z"/>
<path class="w" d="M793.5 293.5H1003.5V386.5H793.5Z"/>
<path class="w" d="M793 371.5L1004 371.5"/>
<path class="w" d="M832.5 293L832.5 372"/>
<path class="w" d="M847.5 293L847.5 372"/>
<path class="w" d="M949.5 293L949.5 372"/>
<path class="w" d="M964.5 293L964.5 372"/>
<path class="w" d="M883.5 165L883.5 123.5L884.5 122.5L912.5 122.5L913.5 123.5L913.5 165"/>
<path class="w" d="M884 123.5L914 123.5"/>
<path class="w" d="M850.5 188L850.5 271"/>
<path class="w" d="M946.5 188L946.5 271"/>
<path class="w" d="M826.5 270L826.5 220.5L850 220.5"/>
<path class="w" d="M946.5 222.5L970.5 222.5L970.5 270"/>
<path class="w15" d="M851 223.8L858 226.5L867 230.1L875 232.5L882 235.1L890 239.5L898.8 244.3L906 248L911 251.5L915 252.2L920.1 249.4L930 243.5L938 238.5L947 233.5"/>
<path class="mh" d="M851 202.5L947 202.5"/>
<path class="md" d="M850.5 220.6L862 220.6L872 220.1L882 225.1L893.4 232.6L898.8 235.1L906 239L913.8 242.5L919 240.5L923.4 237.7L935.1 228.5L938.5 223.1L947 223.1"/>
<path class="mp" d="M856.5 207.5H861.5V225.5H856.5Z"/>
<path class="r" d="M859.5 208L859.5 227"/>
<path class="mp" d="M934.5 211.5H939.5V228.5H934.5Z"/>
<path class="r" d="M937.5 212L937.5 230"/>
<path class="w" d="M828.5 220.5H838.5V242.5H828.5Z"/>
<rect x="830" y="237" width="7" height="5" fill="#f0f"/>
<rect x="832" y="239" width="3" height="3" fill="#000"/>
<path class="w" d="M830.5 242L830.5 294"/>
<path class="w" d="M836.5 242L836.5 294"/>
<path class="r" d="M833.5 221L833.5 294"/>
<path class="w" d="M828 230.5L839 230.5"/>
<path class="w" d="M830 266.5L837 266.5"/>
<path class="w" d="M830 283.5L837 283.5"/>
<path class="w" d="M865.5 285L865.5 257L866.5 255.5L870.5 255.5L871.5 257L871.5 285"/>
<path class="w" d="M863.5 285.5H873.5V293.5H863.5Z"/>
<rect x="865" y="288" width="7" height="5" fill="#f0f"/>
<rect x="867" y="290" width="3" height="3" fill="#000"/>
<path class="r" d="M868.5 249L868.5 294"/>
<path class="w" d="M865 281.5L872 281.5"/>
<path class="w" d="M926.5 285L926.5 257L927.5 255.5L930.5 255.5L931.5 257L931.5 285"/>
<path class="w" d="M922.5 285.5H933.5V293.5H922.5Z"/>
<rect x="924" y="288" width="8" height="5" fill="#f0f"/>
<rect x="926" y="290" width="4" height="3" fill="#000"/>
<path class="r" d="M928.5 249L928.5 294"/>
<path class="w" d="M926 281.5L932 281.5"/>
<path class="w" d="M959.5 224.5H966.5V289.5H959.5Z"/>
<path class="rp" d="M963.5 225L963.5 294"/>
<path class="w" d="M959 226.5L967 226.5"/>
<path class="rd" d="M898.5 119L898.5 390"/>
<text class="tg" x="888.5" y="88" font-size="13" textLength="18" lengthAdjust="spacingAndGlyphs">C-C</text>
<text class="tw" x="842" y="127" font-size="10" textLength="8" lengthAdjust="spacingAndGlyphs">22</text>
<path class="w" d="M840 129.5L853 129.5"/>
<path class="w" d="M852.5 129.5L873.7 197.3"/>
<text class="tw" x="934" y="127" font-size="10" textLength="8" lengthAdjust="spacingAndGlyphs">23</text>
<path class="w" d="M932 129.5L945 129.5"/>
<path class="w" d="M944.5 129.5L963.6 222.8"/>
<text class="tw" x="756" y="179" font-size="10" textLength="8" lengthAdjust="spacingAndGlyphs">21</text>
<path class="w" d="M754 181.5L768 181.5"/>
<path class="w" d="M767.5 181.5L859 215.3"/>
<text class="tw" x="756" y="194" font-size="10" textLength="8" lengthAdjust="spacingAndGlyphs">20</text>
<path class="w" d="M754 196.5L768 196.5"/>
<path class="w" d="M767.5 196.5L847 225"/>
<text class="tw" x="756" y="210" font-size="10" textLength="8" lengthAdjust="spacingAndGlyphs">19</text>
<path class="w" d="M754 212.5L768 212.5"/>
<path class="w" d="M767.5 212.5L857.8 239.8"/>
<text class="tw" x="756" y="231" font-size="10" textLength="8" lengthAdjust="spacingAndGlyphs">18</text>
<path class="w" d="M754 233.5L768 233.5"/>
<path class="w" d="M767.5 233.5L833.6 254.4"/>
<text class="tw" x="756" y="252" font-size="10" textLength="8" lengthAdjust="spacingAndGlyphs">17</text>
<path class="w" d="M754 254.5L768 254.5"/>
<path class="w" d="M767.5 254.5L863.7 276.9"/>
<path class="w" d="M161.5 468.5H402.5V678.5H161.5Z"/>
<path class="w" d="M220.5 501.5H268.5V645.5H220.5Z"/>
<path class="w" d="M271.5 501.5H343.5V645.5H271.5Z"/>
<circle class="w" cx="191.5" cy="516.5" r="11"/>
<circle class="w" cx="372.5" cy="516.5" r="11"/>
<path class="w" d="M220 525.5L269 525.5"/>
<path class="w" d="M220 531.5L269 531.5"/>
<path class="w" d="M220 551.5L269 551.5"/>
<path class="w" d="M220 554.5L269 554.5"/>
<path class="w" d="M220 557.5L269 557.5"/>
<path class="w" d="M220 589.5L269 589.5"/>
<path class="w" d="M220 592.5L269 592.5"/>
<path class="w" d="M220 595.5L269 595.5"/>
<path class="w" d="M220 602.5L269 602.5"/>
<path class="w" d="M220 605.5L269 605.5"/>
<path class="w" d="M220 607.5L269 607.5"/>
<rect x="236" y="531" width="18" height="86" fill="#000"/>
<path class="w" d="M236.5 531L236.5 618"/>
<path class="w" d="M237.5 531L237.5 618"/>
<path class="w" d="M238.5 531L238.5 618"/>
<path class="w" d="M250.5 531L250.5 618"/>
<path class="w" d="M251.5 531L251.5 618"/>
<path class="w" d="M252.5 531L252.5 618"/>
<path class="w" d="M236 617.5L253 617.5"/>
<path class="w" d="M236 616.5L253 616.5"/>
<path class="w" d="M242.5 603L242.5 553.5L244.5 551.5L246.5 553.5L246.5 603"/>
<path class="w" d="M221 542.5L237 542.5"/>
<path class="w" d="M253 542.5L269 542.5"/>
<path class="w" d="M221 546.5L237 546.5"/>
<path class="w" d="M253 546.5L269 546.5"/>
<path class="w" d="M227.5 507.5L231.5 512L231.5 514L227.5 518.5L223.5 514L223.5 512Z"/>
<path class="r" d="M221.5 513.5L234.5 513.5"/>
<path class="r" d="M227.5 507L227.5 520"/>
<path class="w" d="M262 507.5L266 512L266 514L262 518.5L258 514L258 512Z"/>
<path class="r" d="M256 513.5L269 513.5"/>
<path class="r" d="M262.5 507L262.5 520"/>
<path class="w" d="M233.5 511.5H236.5V514.5H233.5Z"/>
<path class="r" d="M231.5 513.5L240.5 513.5"/>
<path class="r" d="M235.5 509L235.5 518"/>
<path class="w" d="M251.5 511.5H254.5V514.5H251.5Z"/>
<path class="r" d="M249.7 513.5L258.7 513.5"/>
<path class="r" d="M253.5 509L253.5 518"/>
<path class="w" d="M227.5 630.5L231.5 635L231.5 637L227.5 641.5L223.5 637L223.5 635Z"/>
<path class="r" d="M221.5 636.5L234.5 636.5"/>
<path class="r" d="M227.5 630L227.5 643"/>
<path class="w" d="M262 630.5L266 635L266 637L262 641.5L258 637L258 635Z"/>
<path class="r" d="M256 636.5L269 636.5"/>
<path class="r" d="M262.5 630L262.5 643"/>
<path class="w" d="M233.5 634.5H236.5V637.5H233.5Z"/>
<path class="r" d="M231.5 636.5L240.5 636.5"/>
<path class="r" d="M235.5 632L235.5 641"/>
<path class="w" d="M251.5 634.5H254.5V637.5H251.5Z"/>
<path class="r" d="M249.7 636.5L258.7 636.5"/>
<path class="r" d="M253.5 632L253.5 641"/>
<circle class="w" cx="227.5" cy="538" r="4.5"/>
<circle class="w" cx="227.5" cy="538" r="2.5"/>
<path class="r" d="M221 538.5L235 538.5"/>
<path class="r" d="M227.5 531.5L227.5 545.5"/>
<circle class="w" cx="262" cy="538" r="4.5"/>
<circle class="w" cx="262" cy="538" r="2.5"/>
<path class="r" d="M255.5 538.5L269.5 538.5"/>
<path class="r" d="M262.5 531.5L262.5 545.5"/>
<circle class="w" cx="227.5" cy="615" r="4.5"/>
<circle class="w" cx="227.5" cy="615" r="2.5"/>
<path class="r" d="M221 615.5L235 615.5"/>
<path class="r" d="M227.5 608.5L227.5 622.5"/>
<circle class="w" cx="262" cy="615" r="4.5"/>
<circle class="w" cx="262" cy="615" r="2.5"/>
<path class="r" d="M255.5 615.5L269.5 615.5"/>
<path class="r" d="M262.5 608.5L262.5 622.5"/>
<circle class="w" cx="244.5" cy="537.5" r="1.5"/>
<path class="w" d="M228.5 621L228.5 629.5L232 629.5L234.5 627.5L255.5 627.5L258 629.5L260.5 629.5L260.5 621"/>
<path class="w" d="M271 546.5L297 546.5"/>
<path class="w" d="M320 546.5L344 546.5"/>
<path class="w" d="M271 549.5L297 549.5"/>
<path class="w" d="M320 549.5L344 549.5"/>
<path class="w" d="M271 583.5L344 583.5"/>
<path class="w" d="M271 593.5L344 593.5"/>
<path class="w" d="M271 607.5L344 607.5"/>
<path class="w" d="M271 621.5L344 621.5"/>
<path class="w" d="M298.5 523.5H317.5V529.5H298.5Z"/>
<path class="w" d="M299 525.5L317 525.5"/>
<path class="w" d="M299 527.5L317 527.5"/>
<path class="w" d="M296.5 546L296.5 533L298.5 530"/>
<path class="w" d="M319.5 546L319.5 533L317.5 530"/>
<path class="w" d="M296.5 533L296.5 590"/>
<path class="w" d="M301.5 533L301.5 590"/>
<path class="w" d="M313.5 533L313.5 590"/>
<path class="w" d="M319.5 533L319.5 590"/>
<path class="w" d="M296 538.5L320 538.5"/>
<path class="w" d="M296 553.5L320 553.5"/>
<path class="w" d="M296 556.5L320 556.5"/>
<path class="w" d="M295.5 589L291.5 618.5L298.5 618.5"/>
<path class="w" d="M319.5 589L323.5 618.5L317.5 618.5"/>
<path class="w" d="M298.5 616.5H317.5V623.5H298.5Z"/>
<path class="w" d="M299 618.5L317 618.5"/>
<path class="w" d="M299 621.5L317 621.5"/>
<circle class="w" cx="278.6" cy="508.5" r="5"/>
<circle class="w" cx="278.6" cy="508.5" r="3"/>
<path class="r" d="M271.6 508.5L286.6 508.5"/>
<path class="r" d="M278.5 501.5L278.5 516.5"/>
<circle class="w" cx="336.4" cy="508.5" r="5"/>
<circle class="w" cx="336.4" cy="508.5" r="3"/>
<path class="r" d="M329.4 508.5L344.4 508.5"/>
<path class="r" d="M336.5 501.5L336.5 516.5"/>
<circle class="w" cx="278.6" cy="522.5" r="3"/>
<path class="r" d="M273.6 522.5L284.6 522.5"/>
<path class="r" d="M278.5 517.5L278.5 528.5"/>
<circle class="w" cx="278.6" cy="638.5" r="5"/>
<circle class="w" cx="278.6" cy="638.5" r="3"/>
<path class="r" d="M271.6 638.5L286.6 638.5"/>
<path class="r" d="M278.5 631.5L278.5 646.5"/>
<circle class="w" cx="322.6" cy="638.5" r="3.5"/>
<path class="r" d="M317.1 638.5L329.1 638.5"/>
<path class="r" d="M322.5 633L322.5 645"/>
<circle class="w" cx="336.4" cy="638.5" r="5"/>
<circle class="w" cx="336.4" cy="638.5" r="3"/>
<path class="r" d="M329.4 638.5L344.4 638.5"/>
<path class="r" d="M336.5 631.5L336.5 646.5"/>
<circle class="m" cx="307.5" cy="543.5" r="3"/>
<circle class="m" cx="307.5" cy="603.5" r="3"/>
<circle class="w" cx="307.5" cy="535.5" r="1.5"/>
<path class="r" d="M289.7 534.5L298.7 534.5"/>
<path class="r" d="M293.5 530.5L293.5 539.5"/>
<path class="r" d="M317.6 534.5L326.6 534.5"/>
<path class="r" d="M321.5 530.5L321.5 539.5"/>
<path class="r" d="M285.9 612.5L294.9 612.5"/>
<path class="r" d="M289.5 608.5L289.5 617.5"/>
<path class="r" d="M321.5 612.5L330.5 612.5"/>
<path class="r" d="M325.5 608.5L325.5 617.5"/>
<path class="rd" d="M282.5 466L282.5 682"/>
<path class="rd" d="M161 516.5L403 516.5"/>
<path class="rd" d="M161 573.5L403 573.5"/>
<path class="r" d="M191.5 501L191.5 534"/>
<path class="r" d="M372.5 501L372.5 534"/>
<path class="rd" d="M244.5 499L244.5 648"/>
<path class="rd" d="M278.5 501L278.5 647"/>
<path class="rd" d="M307.5 501L307.5 647"/>
<path class="rd" d="M336.5 501L336.5 647"/>
<path class="rd" d="M271 508.5L345 508.5"/>
<path class="rd" d="M271 638.5L345 638.5"/>
<path class="r" d="M227.5 506L227.5 546"/>
<path class="r" d="M262.5 506L262.5 546"/>
<path class="r" d="M227.5 608L227.5 644"/>
<path class="r" d="M262.5 608L262.5 644"/>
<path class="g" d="M161 439.5L403 439.5"/>
<path class="g" d="M161.5 436L161.5 469"/>
<path class="g" d="M402.5 436L402.5 469"/>
<path class="g" d="M191 455.5L373 455.5"/>
<path class="g" d="M191.5 453L191.5 502"/>
<path class="g" d="M372.5 453L372.5 502"/>
<text class="tg" x="282" y="437" font-size="10" textLength="13" lengthAdjust="spacingAndGlyphs" text-anchor="middle">400</text>
<text class="tg" x="265.5" y="452.5" font-size="10" textLength="33" lengthAdjust="spacingAndGlyphs">300±0.5</text>
<path class="g" d="M403 468.5L447 468.5"/>
<path class="g" d="M403 516.5L424 516.5"/>
<path class="g" d="M403 573.5L424 573.5"/>
<path class="g" d="M403 678.5L446 678.5"/>
<path class="g" d="M420.5 516L420.5 574"/>
<path class="g" d="M442.5 468L442.5 679"/>
<text class="tg" x="418" y="559" font-size="10" textLength="26" lengthAdjust="spacingAndGlyphs" transform="rotate(-90 418 559)">957.5</text>
<text class="tg" x="440" y="580" font-size="10" textLength="14" lengthAdjust="spacingAndGlyphs" transform="rotate(-90 440 580)">350</text>
<text class="tg" x="130" y="516" font-size="10" textLength="5" lengthAdjust="spacingAndGlyphs">A</text>
<path class="g" d="M135.5 511L135.5 516.5L141 516.5"/>
<text class="tg" x="464.5" y="573" font-size="10" textLength="5" lengthAdjust="spacingAndGlyphs">A</text>
<path class="g" d="M459 573.5L463.5 573.5L463.5 567"/>
<text class="tg" x="221" y="430" font-size="10" textLength="5" lengthAdjust="spacingAndGlyphs">B</text>
<path class="g" d="M227.5 430L227.5 423.5L233 423.5"/>
<text class="tg" x="330" y="429.5" font-size="10" textLength="5" lengthAdjust="spacingAndGlyphs">C</text>
<path class="g" d="M336.5 429L336.5 422.5L343 422.5"/>
<text class="tg" x="248" y="686" font-size="10" textLength="5" lengthAdjust="spacingAndGlyphs">B</text>
<path class="g" d="M253.5 680L253.5 686.5L260 686.5"/>
<text class="tg" x="317" y="688" font-size="10" textLength="5" lengthAdjust="spacingAndGlyphs">C</text>
<path class="g" d="M322.5 682L322.5 688.5L329 688.5"/>
<text class="tg" x="221.5" y="522" font-size="9" textLength="4.5" lengthAdjust="spacingAndGlyphs">A</text>
<path class="g" d="M214 516.5L218.5 516.5L218.5 521"/>
<text class="tg" x="222" y="529" font-size="9" textLength="4.5" lengthAdjust="spacingAndGlyphs">B</text>
<path class="g" d="M227.5 523L227.5 527.5L232 527.5"/>
<text class="tg" x="246.5" y="528.5" font-size="9" textLength="4.5" lengthAdjust="spacingAndGlyphs">B</text>
<path class="g" d="M240 527.5L244.5 527.5L244.5 533"/>
<text class="tg" x="302" y="520.5" font-size="9" textLength="4.5" lengthAdjust="spacingAndGlyphs">C</text>
<path class="g" d="M307.5 520L307.5 516.5L313 516.5"/>
<text class="tg" x="338" y="520" font-size="9" textLength="4.5" lengthAdjust="spacingAndGlyphs">C</text>
<path class="g" d="M332 516.5L336.5 516.5L336.5 520"/>
<text class="tg" x="239.5" y="634" font-size="9" textLength="4.5" lengthAdjust="spacingAndGlyphs">B</text>
<path class="g" d="M244.5 627L244.5 632.5L254 632.5"/>
<text class="tg" x="255" y="631" font-size="9" textLength="4.5" lengthAdjust="spacingAndGlyphs">B</text>
<path class="g" d="M253.5 632L253.5 639"/>
<text class="tg" x="301" y="631" font-size="9" textLength="4.5" lengthAdjust="spacingAndGlyphs">C</text>
<path class="g" d="M307.5 624L307.5 629.5L313 629.5"/>
<text class="tg" x="323" y="632" font-size="9" textLength="4.5" lengthAdjust="spacingAndGlyphs">C</text>
<path class="g" d="M318 629.5L322.5 629.5L322.5 636"/>
<text class="tg" x="213" y="573.5" font-size="9" textLength="4.5" lengthAdjust="spacingAndGlyphs">A</text>
<path class="g" d="M219.5 568L219.5 573.5L224 573.5"/>
<path d="M627.5 534L634.5 534L636 531L658.5 531L664.5 516.5L668 518.5L661 534.5L638 534.5L636.5 537L627.5 537Z" style="fill:#fff;stroke:none"/>
<path class="w" d="M638 532.5L658 532.5L665.5 519" style="stroke:#000"/>
<text class="tg" x="611" y="525" font-size="8" textLength="12" lengthAdjust="spacingAndGlyphs">R3.51</text>
<path class="g" d="M610 526.5L629 526.5"/>
<path class="g" d="M628 526.5L633.8 531.8"/>
<text class="tg" x="638" y="516" font-size="8" textLength="12" lengthAdjust="spacingAndGlyphs">R3.31</text>
<path class="g" d="M635 517.5L652 517.5"/>
<path class="g" d="M635.5 517.5L633.8 531"/>
<text class="tg" x="638" y="525" font-size="8" textLength="14" lengthAdjust="spacingAndGlyphs">R9.72</text>
<path class="g" d="M638 526.5L657 526.5"/>
<path class="g" d="M656 526.5L658.9 531.8"/>
<text class="tg" x="653" y="509" font-size="8" textLength="6" lengthAdjust="spacingAndGlyphs">R1</text>
<path class="g" d="M653 510.5L663 510.5"/>
<path class="g" d="M662.5 510.5L666 517.6"/>
<text class="tg" x="675" y="511" font-size="8" textLength="15" lengthAdjust="spacingAndGlyphs">R10.52</text>
<path class="g" d="M672 512.5L693 512.5"/>
<path class="g" d="M672 512.5L666 517.6"/>
<text class="tg" x="643" y="544.5" font-size="8" textLength="16" lengthAdjust="spacingAndGlyphs">2-R3.5</text>
<path class="g" d="M639 545.5L660 545.5"/>
<path class="g" d="M639.5 545.5L634.8 535.1"/>
<path class="g" d="M615.5 529L615.5 552"/>
<path class="g" d="M613 531.5L634 531.5"/>
<path class="g" d="M613 535.5L628 535.5"/>
<text class="tg" x="614" y="551" font-size="8" textLength="10" lengthAdjust="spacingAndGlyphs" transform="rotate(-90 614 551)">6.43</text>
<rect x="627" y="588" width="42" height="9" fill="#fff"/>
<path class="r" d="M621 592.5L669 592.5"/>
<rect x="631" y="590" width="4" height="5" fill="#000"/>
<rect x="665" y="590" width="2" height="5" fill="#000"/>
<text class="tg" x="618.5" y="583" font-size="8" textLength="6.5" lengthAdjust="spacingAndGlyphs">M3</text>
<path class="g" d="M618 584.5L628 584.5"/>
<path class="g" d="M627.5 584.5L630.1 593.6"/>
<path class="g" d="M627.5 596L627.5 610"/>
<path class="g" d="M630.5 590L630.5 610"/>
<path class="g" d="M613 607.5L634 607.5"/>
<text class="tg" x="613.5" y="606" font-size="8" textLength="9.5" lengthAdjust="spacingAndGlyphs">4.77</text>
<path class="g" d="M668 588.5L686 588.5"/>
<path class="g" d="M668 596.5L686 596.5"/>
<path class="g" d="M675.5 577L675.5 593"/>
<path class="g" d="M683.5 585L683.5 614"/>
<text class="tg" x="674.5" y="584.5" font-size="8" textLength="5" lengthAdjust="spacingAndGlyphs" transform="rotate(-90 674.5 584.5)">1.2</text>
<text class="tg" x="682.5" y="613" font-size="8" textLength="12.5" lengthAdjust="spacingAndGlyphs" transform="rotate(-90 682.5 613)">12.46</text>
<path d="M723 558.3L723 569.5L724 570L744.6 555.6L744.6 546L741 540L735 540L739.7 546.2L735 546.5L738.5 550L727.4 557.1L724 557Z" style="fill:#fff;stroke:none"/>
<rect x="723" y="541" width="21" height="28" fill="url(#dots)" clip-path="url(#ciso)"/>
<path class="w" d="M736 541.5L742 547L740 546.5" style="stroke:#000"/>
<path class="w" d="M737 542.5L740 542.5L742 545.5" style="stroke:#000"/>
<path class="w" d="M915 517.5L1078 517.5"/>
<path class="w" d="M915 523.5L1078 523.5"/>
<path class="w" d="M915 529.5L1078 529.5"/>
<path class="w" d="M915 536.5L1078 536.5"/>
<path class="w" d="M915 542.5L1078 542.5"/>
<path class="w" d="M915 548.5L1078 548.5"/>
<path class="w" d="M915 555.5L1078 555.5"/>
<path class="w" d="M915 561.5L1078 561.5"/>
<path class="w" d="M915 567.5L1078 567.5"/>
<path class="w" d="M915 574.5L1078 574.5"/>
<path class="w" d="M915 580.5L1078 580.5"/>
<path class="w" d="M915 586.5L1078 586.5"/>
<path class="w" d="M915 593.5L1078 593.5"/>
<path class="w" d="M915 599.5L1078 599.5"/>
<path class="w" d="M915 606.5L1078 606.5"/>
<path class="w" d="M915 612.5L1078 612.5"/>
<path class="w" d="M915 618.5L1078 618.5"/>
<path class="w" d="M915 625.5L1078 625.5"/>
<path class="w" d="M915 631.5L1078 631.5"/>
<path class="w" d="M915 637.5L1078 637.5"/>
<path class="w" d="M915 644.5L1078 644.5"/>
<path class="w" d="M915 650.5L1078 650.5"/>
<path class="w" d="M915 656.5L1078 656.5"/>
<path class="w" d="M915 662.5L1078 662.5"/>
<path class="w" d="M915 675.5L1078 675.5"/>
<path class="w" d="M915.5 517L915.5 676"/>
<path class="w" d="M921.5 517L921.5 676"/>
<path class="w" d="M958.5 517L958.5 676"/>
<path class="w" d="M998.5 517L998.5 676"/>
<path class="w" d="M1004.5 517L1004.5 676"/>
<path class="w" d="M1039.5 517L1039.5 676"/>
<path class="w" d="M1059.5 517L1059.5 676"/>
<path class="w" d="M1048.5 517L1048.5 669"/>
<path class="w" d="M1039 668.5L1060 668.5"/>
<path class="w" d="M915 681.5L988 681.5"/>
<path class="w" d="M915 687.5L988 687.5"/>
<path class="w" d="M915 694.5L988 694.5"/>
<path class="w" d="M915 700.5L988 700.5"/>
<path class="w" d="M915 706.5L988 706.5"/>
<path class="w" d="M915 713.5L988 713.5"/>
<path class="w" d="M915 719.5L988 719.5"/>
<path class="w" d="M924.5 675L924.5 701"/>
<path class="w" d="M933.5 675L933.5 701"/>
<path class="w" d="M948.5 675L948.5 701"/>
<path class="w" d="M962.5 675L962.5 701"/>
<path class="w" d="M972.5 675L972.5 701"/>
<path class="w" d="M925.5 700L925.5 726"/>
<path class="w" d="M936.5 700L936.5 726"/>
<path class="w" d="M951.5 700L951.5 726"/>
<path class="w" d="M962.5 700L962.5 726"/>
<path class="w" d="M972.5 700L972.5 726"/>
<path class="w" d="M915.5 675L915.5 726"/>
<path class="w" d="M987.5 675L987.5 726"/>
<path class="w" d="M1032.5 675L1032.5 726"/>
<path class="w" d="M987 700.5L1033 700.5"/>
<path class="w" d="M987 709.5L1078 709.5"/>
<path class="w" d="M987 717.5L1033 717.5"/>
<path class="w" d="M1032 691.5L1078 691.5"/>
<path class="w" d="M1010.5 700L1010.5 718"/>
<path class="w" d="M1021.5 700L1021.5 718"/>
<path class="w" d="M992.5 709L992.5 718"/>
<path class="w" d="M998.5 709L998.5 718"/>
<path class="w" d="M1004.5 709L1004.5 718"/>
<rect x="1022" y="711" width="7" height="4" fill="#fff"/>
<text class="tw tb" x="916" y="522.6" font-size="6" textLength="4.5" lengthAdjust="spacingAndGlyphs">23</text>
<text class="tw tb" x="922.5" y="522.6" font-size="6" textLength="25" lengthAdjust="spacingAndGlyphs">GB/T70.1-2000</text>
<text class="tw tb" x="959" y="522.6" font-size="6" textLength="22.4" lengthAdjust="spacingAndGlyphs" style="font-family:'Liberation Sans','Noto Sans CJK SC',sans-serif">螺钉M8×50</text>
<text class="tw tb" x="999" y="522.6" font-size="6" textLength="3" lengthAdjust="spacingAndGlyphs">2</text>
<text class="tw tb" x="1005.5" y="522.6" font-size="6" textLength="5" lengthAdjust="spacingAndGlyphs">45</text>
<text class="tw tb" x="916" y="528.96" font-size="6" textLength="4.5" lengthAdjust="spacingAndGlyphs">22</text>
<text class="tw tb" x="959" y="528.96" font-size="6" textLength="6.4" lengthAdjust="spacingAndGlyphs" style="font-family:'Liberation Sans','Noto Sans CJK SC',sans-serif">凹模</text>
<text class="tw tb" x="999" y="528.96" font-size="6" textLength="3" lengthAdjust="spacingAndGlyphs">1</text>
<text class="tw tb" x="1005.5" y="528.96" font-size="6" textLength="9" lengthAdjust="spacingAndGlyphs">T10A</text>
<text class="tw tb" x="916" y="535.32" font-size="6" textLength="4.5" lengthAdjust="spacingAndGlyphs">21</text>
<text class="tw tb" x="922.5" y="535.32" font-size="6" textLength="25" lengthAdjust="spacingAndGlyphs">GB/T70.1-2000</text>
<text class="tw tb" x="959" y="535.32" font-size="6" textLength="22.4" lengthAdjust="spacingAndGlyphs" style="font-family:'Liberation Sans','Noto Sans CJK SC',sans-serif">螺钉M8×35</text>
<text class="tw tb" x="999" y="535.32" font-size="6" textLength="3" lengthAdjust="spacingAndGlyphs">4</text>
<text class="tw tb" x="1005.5" y="535.32" font-size="6" textLength="5" lengthAdjust="spacingAndGlyphs">45</text>
<text class="tw tb" x="916" y="541.68" font-size="6" textLength="4.5" lengthAdjust="spacingAndGlyphs">20</text>
<text class="tw tb" x="959" y="541.68" font-size="6" textLength="6.4" lengthAdjust="spacingAndGlyphs" style="font-family:'Liberation Sans','Noto Sans CJK SC',sans-serif">导板</text>
<text class="tw tb" x="999" y="541.68" font-size="6" textLength="3" lengthAdjust="spacingAndGlyphs">1</text>
<text class="tw tb" x="1005.5" y="541.68" font-size="6" textLength="5" lengthAdjust="spacingAndGlyphs">45</text>
<text class="tw tb" x="916" y="548.04" font-size="6" textLength="4.5" lengthAdjust="spacingAndGlyphs">19</text>
<text class="tw tb" x="959" y="548.04" font-size="6" textLength="6.4" lengthAdjust="spacingAndGlyphs" style="font-family:'Liberation Sans','Noto Sans CJK SC',sans-serif">凸模</text>
<text class="tw tb" x="999" y="548.04" font-size="6" textLength="3" lengthAdjust="spacingAndGlyphs">1</text>
<text class="tw tb" x="1005.5" y="548.04" font-size="6" textLength="9" lengthAdjust="spacingAndGlyphs">T10A</text>
<text class="tw tb" x="916" y="554.4" font-size="6" textLength="4.5" lengthAdjust="spacingAndGlyphs">18</text>
<text class="tw tb" x="922.5" y="554.4" font-size="6" textLength="25" lengthAdjust="spacingAndGlyphs">GB/T119-2000</text>
<text class="tw tb" x="959" y="554.4" font-size="6" textLength="27" lengthAdjust="spacingAndGlyphs" style="font-family:'Liberation Sans','Noto Sans CJK SC',sans-serif">圆柱销 Φ8×70</text>
<text class="tw tb" x="999" y="554.4" font-size="6" textLength="3" lengthAdjust="spacingAndGlyphs">4</text>
<text class="tw tb" x="1005.5" y="554.4" font-size="6" textLength="5" lengthAdjust="spacingAndGlyphs">45</text>
<text class="tw tb" x="916" y="560.76" font-size="6" textLength="4.5" lengthAdjust="spacingAndGlyphs">17</text>
<text class="tw tb" x="922.5" y="560.76" font-size="6" textLength="25" lengthAdjust="spacingAndGlyphs">GB/T119-2000</text>
<text class="tw tb" x="959" y="560.76" font-size="6" textLength="27" lengthAdjust="spacingAndGlyphs" style="font-family:'Liberation Sans','Noto Sans CJK SC',sans-serif">圆柱销 Φ8×40</text>
<text class="tw tb" x="999" y="560.76" font-size="6" textLength="3" lengthAdjust="spacingAndGlyphs">2</text>
<text class="tw tb" x="1005.5" y="560.76" font-size="6" textLength="5" lengthAdjust="spacingAndGlyphs">45</text>
<text class="tw tb" x="916" y="567.12" font-size="6" textLength="4.5" lengthAdjust="spacingAndGlyphs">16</text>
<text class="tw tb" x="959" y="567.12" font-size="6" textLength="6.4" lengthAdjust="spacingAndGlyphs" style="font-family:'Liberation Sans','Noto Sans CJK SC',sans-serif">顶杆</text>
<text class="tw tb" x="999" y="567.12" font-size="6" textLength="3" lengthAdjust="spacingAndGlyphs">1</text>
<text class="tw tb" x="1005.5" y="567.12" font-size="6" textLength="5" lengthAdjust="spacingAndGlyphs">45</text>
<text class="tw tb" x="916" y="573.48" font-size="6" textLength="4.5" lengthAdjust="spacingAndGlyphs">15</text>
<text class="tw tb" x="922.5" y="573.48" font-size="6" textLength="25" lengthAdjust="spacingAndGlyphs">GB/T70.1-2000</text>
<text class="tw tb" x="959" y="573.48" font-size="6" textLength="22.4" lengthAdjust="spacingAndGlyphs" style="font-family:'Liberation Sans','Noto Sans CJK SC',sans-serif">螺钉M6×20</text>
<text class="tw tb" x="999" y="573.48" font-size="6" textLength="3" lengthAdjust="spacingAndGlyphs">4</text>
<text class="tw tb" x="1005.5" y="573.48" font-size="6" textLength="5" lengthAdjust="spacingAndGlyphs">45</text>
<text class="tw tb" x="916" y="579.84" font-size="6" textLength="4.5" lengthAdjust="spacingAndGlyphs">14</text>
<text class="tw tb" x="959" y="579.84" font-size="6" textLength="6.4" lengthAdjust="spacingAndGlyphs" style="font-family:'Liberation Sans','Noto Sans CJK SC',sans-serif">压板</text>
<text class="tw tb" x="999" y="579.84" font-size="6" textLength="3" lengthAdjust="spacingAndGlyphs">1</text>
<text class="tw tb" x="1005.5" y="579.84" font-size="6" textLength="5" lengthAdjust="spacingAndGlyphs">45</text>
<text class="tw tb" x="916" y="586.2" font-size="6" textLength="4.5" lengthAdjust="spacingAndGlyphs">13</text>
<text class="tw tb" x="959" y="586.2" font-size="6" textLength="6.4" lengthAdjust="spacingAndGlyphs" style="font-family:'Liberation Sans','Noto Sans CJK SC',sans-serif">卸料</text>
<text class="tw tb" x="999" y="586.2" font-size="6" textLength="3" lengthAdjust="spacingAndGlyphs">1</text>
<text class="tw tb" x="1005.5" y="586.2" font-size="6" textLength="5" lengthAdjust="spacingAndGlyphs">45</text>
<text class="tw tb" x="916" y="592.56" font-size="6" textLength="4.5" lengthAdjust="spacingAndGlyphs">12</text>
<text class="tw tb" x="922.5" y="592.56" font-size="6" textLength="25" lengthAdjust="spacingAndGlyphs">GB/T2867.5-81</text>
<text class="tw tb" x="959" y="592.56" font-size="6" textLength="27" lengthAdjust="spacingAndGlyphs" style="font-family:'Liberation Sans','Noto Sans CJK SC',sans-serif">卸料螺钉 M8×65</text>
<text class="tw tb" x="999" y="592.56" font-size="6" textLength="3" lengthAdjust="spacingAndGlyphs">4</text>
<text class="tw tb" x="1005.5" y="592.56" font-size="6" textLength="5" lengthAdjust="spacingAndGlyphs">45</text>
<text class="tw tb" x="916" y="598.92" font-size="6" textLength="4.5" lengthAdjust="spacingAndGlyphs">11</text>
<text class="tw tb" x="922.5" y="598.92" font-size="6" textLength="25" lengthAdjust="spacingAndGlyphs">GB/T119-2000</text>
<text class="tw tb" x="959" y="598.92" font-size="6" textLength="27" lengthAdjust="spacingAndGlyphs" style="font-family:'Liberation Sans','Noto Sans CJK SC',sans-serif">圆柱销 Φ8×50</text>
<text class="tw tb" x="999" y="598.92" font-size="6" textLength="3" lengthAdjust="spacingAndGlyphs">4</text>
<text class="tw tb" x="1005.5" y="598.92" font-size="6" textLength="5" lengthAdjust="spacingAndGlyphs">45</text>
<text class="tw tb" x="916" y="605.28" font-size="6" textLength="4.5" lengthAdjust="spacingAndGlyphs">10</text>
<text class="tw tb" x="959" y="605.28" font-size="6" textLength="6.4" lengthAdjust="spacingAndGlyphs" style="font-family:'Liberation Sans','Noto Sans CJK SC',sans-serif">凹模</text>
<text class="tw tb" x="999" y="605.28" font-size="6" textLength="3" lengthAdjust="spacingAndGlyphs">1</text>
<text class="tw tb" x="1005.5" y="605.28" font-size="6" textLength="9" lengthAdjust="spacingAndGlyphs">T10A</text>
<text class="tw tb" x="916" y="611.64" font-size="6" textLength="4.5" lengthAdjust="spacingAndGlyphs">9</text>
<text class="tw tb" x="922.5" y="611.64" font-size="6" textLength="25" lengthAdjust="spacingAndGlyphs">GB/T70.1-2000</text>
<text class="tw tb" x="959" y="611.64" font-size="6" textLength="22.4" lengthAdjust="spacingAndGlyphs" style="font-family:'Liberation Sans','Noto Sans CJK SC',sans-serif">螺钉M8×55</text>
<text class="tw tb" x="999" y="611.64" font-size="6" textLength="3" lengthAdjust="spacingAndGlyphs">4</text>
<text class="tw tb" x="1005.5" y="611.64" font-size="6" textLength="5" lengthAdjust="spacingAndGlyphs">45</text>
<text class="tw tb" x="916" y="618" font-size="6" textLength="4.5" lengthAdjust="spacingAndGlyphs">8</text>
<text class="tw tb" x="959" y="618" font-size="6" textLength="6.4" lengthAdjust="spacingAndGlyphs" style="font-family:'Liberation Sans','Noto Sans CJK SC',sans-serif">垫板</text>
<text class="tw tb" x="999" y="618" font-size="6" textLength="3" lengthAdjust="spacingAndGlyphs">1</text>
<text class="tw tb" x="1005.5" y="618" font-size="6" textLength="5" lengthAdjust="spacingAndGlyphs">45</text>
<text class="tw tb" x="916" y="624.36" font-size="6" textLength="4.5" lengthAdjust="spacingAndGlyphs">7</text>
<text class="tw tb" x="959" y="624.36" font-size="6" textLength="27" lengthAdjust="spacingAndGlyphs" style="font-family:'Liberation Sans','Noto Sans CJK SC',sans-serif">上模座250×200</text>
<text class="tw tb" x="999" y="624.36" font-size="6" textLength="3" lengthAdjust="spacingAndGlyphs">1</text>
<text class="tw tb" x="1005.5" y="624.36" font-size="6" textLength="9" lengthAdjust="spacingAndGlyphs">HT200</text>
<text class="tw tb" x="916" y="630.72" font-size="6" textLength="4.5" lengthAdjust="spacingAndGlyphs">6</text>
<text class="tw tb" x="922.5" y="630.72" font-size="6" textLength="25" lengthAdjust="spacingAndGlyphs">GB/T119-2000</text>
<text class="tw tb" x="959" y="630.72" font-size="6" textLength="27" lengthAdjust="spacingAndGlyphs" style="font-family:'Liberation Sans','Noto Sans CJK SC',sans-serif">圆柱销 Φ10×60</text>
<text class="tw tb" x="999" y="630.72" font-size="6" textLength="3" lengthAdjust="spacingAndGlyphs">2</text>
<text class="tw tb" x="1005.5" y="630.72" font-size="6" textLength="5" lengthAdjust="spacingAndGlyphs">45</text>
<text class="tw tb" x="916" y="637.08" font-size="6" textLength="4.5" lengthAdjust="spacingAndGlyphs">5</text>
<text class="tw tb" x="959" y="637.08" font-size="6" textLength="25.6" lengthAdjust="spacingAndGlyphs" style="font-family:'Liberation Sans','Noto Sans CJK SC',sans-serif">导柱32×160</text>
<text class="tw tb" x="999" y="637.08" font-size="6" textLength="3" lengthAdjust="spacingAndGlyphs">2</text>
<text class="tw tb" x="1005.5" y="637.08" font-size="6" textLength="5" lengthAdjust="spacingAndGlyphs">20</text>
<text class="tw tb" x="916" y="643.44" font-size="6" textLength="4.5" lengthAdjust="spacingAndGlyphs">4</text>
<text class="tw tb" x="959" y="643.44" font-size="6" textLength="25.6" lengthAdjust="spacingAndGlyphs" style="font-family:'Liberation Sans','Noto Sans CJK SC',sans-serif">导套32×100</text>
<text class="tw tb" x="999" y="643.44" font-size="6" textLength="3" lengthAdjust="spacingAndGlyphs">2</text>
<text class="tw tb" x="1005.5" y="643.44" font-size="6" textLength="5" lengthAdjust="spacingAndGlyphs">20</text>
<text class="tw tb" x="916" y="649.8" font-size="6" textLength="4.5" lengthAdjust="spacingAndGlyphs">3</text>
<text class="tw tb" x="959" y="649.8" font-size="6" textLength="27" lengthAdjust="spacingAndGlyphs" style="font-family:'Liberation Sans','Noto Sans CJK SC',sans-serif">下模座250×200</text>
<text class="tw tb" x="999" y="649.8" font-size="6" textLength="3" lengthAdjust="spacingAndGlyphs">1</text>
<text class="tw tb" x="1005.5" y="649.8" font-size="6" textLength="9" lengthAdjust="spacingAndGlyphs">HT200</text>
<text class="tw tb" x="916" y="656.16" font-size="6" textLength="4.5" lengthAdjust="spacingAndGlyphs">2</text>
<text class="tw tb" x="959" y="656.16" font-size="6" textLength="6.4" lengthAdjust="spacingAndGlyphs" style="font-family:'Liberation Sans','Noto Sans CJK SC',sans-serif">垫块</text>
<text class="tw tb" x="999" y="656.16" font-size="6" textLength="3" lengthAdjust="spacingAndGlyphs">1</text>
<text class="tw tb" x="1005.5" y="656.16" font-size="6" textLength="9" lengthAdjust="spacingAndGlyphs">HT200</text>
<text class="tw tb" x="916" y="662.52" font-size="6" textLength="4.5" lengthAdjust="spacingAndGlyphs">1</text>
<text class="tw tb" x="959" y="662.52" font-size="6" textLength="27" lengthAdjust="spacingAndGlyphs" style="font-family:'Liberation Sans','Noto Sans CJK SC',sans-serif">下模座250×200</text>
<text class="tw tb" x="999" y="662.52" font-size="6" textLength="3" lengthAdjust="spacingAndGlyphs">1</text>
<text class="tw tb" x="1005.5" y="662.52" font-size="6" textLength="5" lengthAdjust="spacingAndGlyphs">45</text>
<text class="tw tb" x="916" y="671" font-size="5" textLength="3" lengthAdjust="spacingAndGlyphs" style="font-family:'Liberation Sans','Noto Sans CJK SC',sans-serif">序</text>
<text class="tw tb" x="936" y="671" font-size="5" textLength="5" lengthAdjust="spacingAndGlyphs" style="font-family:'Liberation Sans','Noto Sans CJK SC',sans-serif">代号</text>
<text class="tw tb" x="974" y="671" font-size="5" textLength="5" lengthAdjust="spacingAndGlyphs" style="font-family:'Liberation Sans','Noto Sans CJK SC',sans-serif">名称</text>
<text class="tw tb" x="999" y="671" font-size="5" textLength="3" lengthAdjust="spacingAndGlyphs" style="font-family:'Liberation Sans','Noto Sans CJK SC',sans-serif">数</text>
<text class="tw tb" x="1018" y="671" font-size="5" textLength="5" lengthAdjust="spacingAndGlyphs" style="font-family:'Liberation Sans','Noto Sans CJK SC',sans-serif">材料</text>
<text class="tw tb" x="1041" y="667" font-size="4" textLength="3" lengthAdjust="spacingAndGlyphs" style="font-family:'Liberation Sans','Noto Sans CJK SC',sans-serif">单</text>
<text class="tw tb" x="1051" y="667" font-size="4" textLength="3" lengthAdjust="spacingAndGlyphs" style="font-family:'Liberation Sans','Noto Sans CJK SC',sans-serif">总</text>
<text class="tw tb" x="1046" y="674" font-size="4" textLength="3" lengthAdjust="spacingAndGlyphs" style="font-family:'Liberation Sans','Noto Sans CJK SC',sans-serif">重</text>
<text class="tw tb" x="1064" y="671" font-size="5" textLength="5" lengthAdjust="spacingAndGlyphs" style="font-family:'Liberation Sans','Noto Sans CJK SC',sans-serif">备注</text>
</svg>
<div id="tb"><div class="l1"></div><div class="l2"></div>
<svg width="1105" height="25" viewBox="0 0 1105 25">
<defs>
<linearGradient id="gl" x1="0" y1="0" x2="1" y2="1"><stop offset="0" stop-color="#eaf3fb"/><stop offset="1" stop-color="#9fc3e3"/></linearGradient>
<radialGradient id="lens" cx=".4" cy=".4" r=".7"><stop offset="0" stop-color="#fff"/><stop offset="1" stop-color="#a9c8e6"/></radialGradient>
<g id="mag"><line x1="9" y1="10" x2="14" y2="15.5" stroke="#c07a2a" stroke-width="2.4" stroke-linecap="round"/><circle cx="6" cy="6.5" r="5" fill="url(#lens)" stroke="#6b7f96" stroke-width="1.3"/></g>
<g id="sep"><rect x="0" y="1" width="1" height="18" fill="#6a6a6a"/></g>
<g id="grip"><rect x="0" y="0" width="1" height="21" fill="#a0a0a0"/><rect x="1" y="0" width="1" height="21" fill="#fff"/></g>
<g id="lay"><path d="M1 11l8-3.5 8 3.5-8 3.5z" fill="#7fa7d6" stroke="#5f86b8" stroke-width=".6"/><path d="M1 8l8-3.5 8 3.5-8 3.5z" fill="#dfe9f5" stroke="#8aa5c6" stroke-width=".6"/><path d="M1 5l8-3.5 8 3.5-8 3.5z" fill="#a9c4e4" stroke="#6f93c0" stroke-width=".6"/></g>
</defs>
<!-- printer -->
<g transform="translate(0,3)"><path d="M4 1h7l1 6H3z" fill="#fff" stroke="#9aa3c4" stroke-width=".8"/><path d="M1 7.5q0-1.5 2-1.5h9q2 0 2 1.5v4H1z" fill="#dfe3f3" stroke="#6f78ad" stroke-width=".9"/><path d="M3 10h9l1 4H2z" fill="#fff" stroke="#8088b8" stroke-width=".8"/></g>
<!-- preview -->
<g transform="translate(22,2)"><path d="M1 .5h10l4 4V15H1z" fill="url(#gl)" stroke="#3b78c4" stroke-width="1"/><line x1="11" y1="12" x2="6" y2="17.5" stroke="#b46a1e" stroke-width="2" stroke-linecap="round"/><circle cx="11" cy="9" r="3.6" fill="#e4f0fb" stroke="#7f8fa6" stroke-width="1.1"/></g>
<!-- publish -->
<g transform="translate(45,2)"><circle cx="11" cy="6" r="5.5" fill="#3d8fd0"/><path d="M8 3q3-2 6 0l-2 4z" fill="#8fd06a"/><path d="M1 11q0-2 2-2h9q2 0 2 2v3H1z" fill="#dfe3f3" stroke="#6f78ad" stroke-width=".9"/><path d="M3 12.5h9l1 3.5H2z" fill="#fff" stroke="#8088b8" stroke-width=".8"/><path d="M2 2l8-1 1 7-8 1z" fill="#f3c325" stroke="#c99512" stroke-width=".6"/><circle cx="5.5" cy="4" r=".9" fill="#fff"/><circle cx="8" cy="3.7" r=".9" fill="#fff"/></g>
<!-- globe -->
<g transform="translate(68,2)"><path d="M0 6l5 1v10l-5-2z" fill="#e4ecf6" stroke="#b5c3d6" stroke-width=".6"/><path d="M5 7l6-1v8l-6 3z" fill="#c3d2e6"/><circle cx="10" cy="7.5" r="6" fill="#2f8fc9"/><path d="M5 5q5-5 10 0-5 2-10 0z" fill="#58b7e6"/><path d="M4.5 9q5 3 11 0" fill="none" stroke="#e8c21c" stroke-width="1.2"/><path d="M10 1.5q-4 6 0 12" fill="none" stroke="#d9452b" stroke-width="1.2"/><path d="M7 3q6 1 8 7" fill="none" stroke="#e07a2a" stroke-width="1"/></g>
<use href="#sep" x="90"/>
<!-- scissors -->
<g transform="translate(97,4)" fill="none" stroke="#1f3f7a" stroke-width="1.2"><path d="M0 2l11 6"/><path d="M0 8l11-4"/><circle cx="13" cy="3.6" r="2.1"/><circle cx="13" cy="9.6" r="2.1"/></g>
<!-- copy -->
<g transform="translate(119,2)"><path d="M1 1h8l3 3v8H1z" fill="url(#gl)" stroke="#2f6fc0" stroke-width="1.1"/><path d="M5 5h8l3 3v8H5z" fill="url(#gl)" stroke="#2f6fc0" stroke-width="1.1"/></g>
<!-- paste -->
<g transform="translate(143,2)"><path d="M2 3l9-1 4 6-3 8-8 1-3-7z" fill="#f0c659" stroke="#b98a1c" stroke-width="1"/><path d="M5 1h5v3H5z" fill="#fff" stroke="#888" stroke-width=".7"/><path d="M4 5h6l2 2v6H4z" fill="url(#gl)" stroke="#5f8fc6" stroke-width=".9"/></g>
<!-- brush -->
<g transform="translate(167,3)"><path d="M13.5 1.5l-7 8" stroke="#c8834a" stroke-width="2.2" stroke-linecap="round"/><path d="M8 8l-2.5 3" stroke="#6b7785" stroke-width="2.4"/><path d="M6.5 9.5q-2 0-3 2t-3 2.5q4 1 6-.5t1.500-3z" fill="#222"/></g>
<!-- match prop -->
<g transform="translate(189,2)"><path d="M13 0l3 .5-3 5h3l-7 9 2-7H8z" fill="#f6d128" stroke="#b8930e" stroke-width=".6"/><rect x="2" y="8.500" width="8" height="7" fill="#f58e62" stroke="#1f5fbf" stroke-width="1"/><rect x="0" y="14" width="3" height="3" fill="#1c6fe0"/></g>
<use href="#sep" x="212"/>
<!-- undo -->
<g transform="translate(218,2)"><path d="M14.500 4q-8-2.500-9 6" fill="none" stroke="#1b3f7c" stroke-width="2.6"/><path d="M.5 8.500l9 1-5 6z" fill="#1b3f7c"/></g>
<path d="M242 8h5l-2.500 3z" fill="#1b3f7c"/>
<g transform="translate(256,2)" opacity=".9"><path d="M1 4q8-2.500 9 6" fill="none" stroke="#c5c9cf" stroke-width="2.600"/><path d="M15 8.500l-9 1 5 6z" fill="#c5c9cf"/></g>
<path d="M278 8h5l-2.500 3z" fill="#bfc3c9"/>
<use href="#sep" x="289"/>
<!-- pan -->
<g transform="translate(296,2)"><path d="M1 3q1-2 3 0l1 1q1-2 3 0l1 2q1-1 2 0l1 5-4 4-5-4z" fill="#d99a9a" stroke="#b26f73" stroke-width=".7"/><path d="M8 13l4-3 3 3v3h-6z" fill="#1f4f94"/><path d="M12.500 0v7M9 3.500h7" stroke="#1f4f94" stroke-width="1.1"/><path d="M12.500-.5l1.500 2h-3zM12.500 7.500l1.500-2h-3zM8.500 3.500l2-1.500v3zM16.500 3.500l-2-1.500v3z" fill="#1f4f94"/></g>
<g transform="translate(319,2)"><use href="#mag"/><path d="M12 4.500h4M14 1v4M12 7.500h4" stroke="#1f3f7a" stroke-width="1.100"/></g>
<g transform="translate(342,2)"><use href="#mag"/><rect x="3.500" y="3.500" width="5" height="5" fill="none" stroke="#2a4f9c" stroke-width="1.200"/><path d="M16 13v4h-4z" fill="#000"/></g>
<g transform="translate(365,2)"><use href="#mag"/><path d="M13 3q-3-3-7 1" fill="none" stroke="#1f3f7a" stroke-width="1.800"/><path d="M3 3l5 0-2 5z" fill="#1f3f7a"/></g>
<use href="#sep" x="387"/>
<!-- properties -->
<g transform="translate(393,2)"><rect x="0" y="0" width="3" height="4" fill="#f0f"/><rect x="3" y="0" width="3" height="4" fill="#f00"/><rect x="6" y="0" width="3" height="4" fill="#ff0"/><rect x="9" y="0" width="3" height="4" fill="#0c0"/><rect x="12" y="0" width="3" height="4" fill="#f60"/><path d="M4 6q5-3 10-1v4H6z" fill="#e0a9a0" stroke="#a86d68" stroke-width=".600"/><rect x="1" y="6" width="5" height="3" fill="#d8d36a" stroke="#8d8a3a" stroke-width=".500"/><path d="M2 11q2 1.500 4 0M2 14q2 1.500 4 0" fill="none" stroke="#3a5f9c" stroke-width="1.200"/><path d="M10 16l3-8 3 8M11 13h4" fill="none" stroke="#333" stroke-width="1.300"/><rect x="14" y="3" width="1.500" height="7" fill="#3a5f9c"/></g>
<!-- design center -->
<g transform="translate(417,2)"><rect x=".500" y=".500" width="15" height="15" fill="#eef3fb" stroke="#1f4fb0" stroke-width="1.300"/><rect x="4.500" y=".500" width="1" height="15" fill="#1f4fb0"/><path d="M2.500 2v12" stroke="#e6c61c" stroke-width="1.200" stroke-dasharray="1.500 1.500"/><rect x="7.500" y="3" width="2.500" height="2.500" fill="#8fd0c0" stroke="#246"/><rect x="11.500" y="3" width="2.500" height="2.500" fill="#f2e05a" stroke="#246" stroke-width=".600"/><rect x="7.500" y="7" width="2.500" height="2.500" fill="#8fd0c0" stroke="#246" stroke-width=".600"/><rect x="11.500" y="7" width="2.500" height="2.500" fill="#f2e05a" stroke="#246" stroke-width=".600"/><rect x="9" y="11" width="3" height="3" fill="#f2e05a" stroke="#246" stroke-width=".600"/></g>
<!-- tool palettes -->
<g transform="translate(440,2)"><path d="M.500 .500h7l1 1v14h-8z" fill="#eef3fb" stroke="#1f4fb0" stroke-width="1.300"/><rect x="3.500" y="3" width="2.500" height="2.500" fill="#8fd0c0" stroke="#246" stroke-width=".600"/><rect x="3.500" y="7" width="2.500" height="2.500" fill="#f2e05a" stroke="#246" stroke-width=".600"/><rect x="3.500" y="11" width="2.500" height="2.500" fill="#8fd0c0" stroke="#246" stroke-width=".600"/><path d="M8 4q6-1 6 6" fill="none" stroke="#1f3f7a" stroke-width="1.800"/><path d="M11 9h6l-3 3.500z" fill="#1f3f7a"/><rect x="12" y="12.500" width="3.500" height="3.500" fill="#f2e05a" stroke="#246" stroke-width=".700"/></g>
<!-- sheet set -->
<g transform="translate(463,3)"><rect x="0" y="0" width="16" height="15" fill="#6f9fc8"/><path d="M0 3l9 4v7l-9-3z" fill="#d9dde0"/><path d="M0 3l10-3 4 2-5 5z" fill="#e9ecee"/><circle cx="12" cy="8" r="3.500" fill="#c9ced2" stroke="#9aa2a8" stroke-width=".800"/><circle cx="12" cy="8" r="1.300" fill="#8e979e"/><path d="M0 11l9 3h7v1H0z" fill="#4f86b8"/></g>
<!-- markup -->
<g transform="translate(486,2)"><path d="M5 5h11v11H5z" fill="#dcdfe3" stroke="#8b9097" stroke-width=".800"/><path d="M3 3h11v11H3z" fill="#c9d7e8" stroke="#8b9097" stroke-width=".800"/><path d="M2 3q-1-3 2-2.500q2-2 4 0q3-1 3 2q2 2 0 4q1 3-2 3q-2 2-4 0q-3 1-3-2q-2-2 0-4.500z" fill="#fff" stroke="#e21f26" stroke-width="1.500"/></g>
<!-- calculator -->
<g transform="translate(510,2)"><rect x="0" y="0" width="12" height="16" rx="1" fill="#1a1a1a"/><rect x="1.500" y="1.500" width="9" height="3" fill="#5f8f5a"/><g fill="#fff"><rect x="2" y="10" width="2" height="2"/><rect x="5" y="10" width="2" height="2"/><rect x="8" y="10" width="2" height="2"/><rect x="2" y="13" width="2" height="2"/><rect x="5" y="13" width="2" height="2"/><rect x="8" y="13" width="2" height="2"/></g><g fill="#e33"><rect x="2" y="7" width="2" height="2"/><rect x="5" y="7" width="2" height="2"/><rect x="8" y="7" width="2" height="2"/></g></g>
<use href="#sep" x="531"/>
<!-- help -->
<g transform="translate(539,2)"><rect x="0" y="0" width="15" height="15" rx="2.500" fill="#1f5aa8" stroke="#123f7c" stroke-width=".800"/><text x="7.500" y="13" font-family="Liberation Sans,sans-serif" font-weight="bold" font-size="14.500" fill="#fff" text-anchor="middle">?</text></g>
<rect x="561" y="0" width="1" height="21" fill="#a0a0a0"/><rect x="562" y="0" width="1" height="21" fill="#fff"/>
<use href="#grip" x="565"/><use href="#grip" x="569"/>
<g transform="translate(578,2)"><use href="#lay"/></g>
<!-- layer dropdown -->
<path d="M602 0h295v20H600V2z" fill="#fff"/>
<g transform="translate(606,2)"><path d="M5 0q4.500 0 4.500 4.500q0 2-1.500 3.500l-.500 3h-5l-.500-3Q.500 6.500 .500 4.500Q.500 0 5 0z" fill="#fdf6b0" stroke="#c9a21c" stroke-width="1"/><rect x="3" y="11.500" width="4" height="3" fill="#8b8fb8" stroke="#55597f" stroke-width=".600"/></g>
<circle cx="627" cy="10" r="6.200" fill="#f6e04a" stroke="#2f6fc0" stroke-width="1"/>
<g transform="translate(636,2)"><circle cx="6" cy="6" r="5.500" fill="#a9c4e4" stroke="#7f9fc8" stroke-width=".800"/><circle cx="6" cy="6" r="2.300" fill="#eef3fb" stroke="#7f9fc8" stroke-width=".800"/><rect x="6.500" y="7.500" width="7" height="7" fill="#fff" stroke="#7f93b0" stroke-width=".900"/></g>
<g transform="translate(654,2)"><path d="M2 7V4q0-3.500 3.500-3.500T9 3" fill="none" stroke="#a89a14" stroke-width="1.600"/><rect x="4.500" y="6" width="8.500" height="8" rx="1" fill="#e9de4c" stroke="#a89a14" stroke-width="1"/><path d="M6.500 8.500v3.500M8.500 8.500v3.500M10.500 8.500v3.500" stroke="#fff" stroke-width=".800"/></g>
<rect x="671.500" y="5.500" width="9" height="9" fill="#fff" stroke="#000" stroke-width="1.200"/>
<text x="685.500" y="14" font-family="Liberation Serif,serif" font-size="12" fill="#000">0</text>
<path d="M886.500 8h7l-3.500 4z" fill="#000"/>
<g transform="translate(902,2)"><use href="#lay"/><path d="M1 11l8-3.500 8 3.500-8 3.500z" fill="#f2d21c" stroke="#b8930e" stroke-width=".600"/><path d="M0 17l4-4M1.500 13H4v2.500" stroke="#1f3f9c" stroke-width="1.200" fill="none"/></g>
<g transform="translate(925,2)"><use href="#lay"/><path d="M13 6q-1-4-5-3" fill="none" stroke="#1f4f9c" stroke-width="1.600"/><path d="M5 4l4-3v5z" fill="#1f4f9c"/></g>
<rect x="948" y="0" width="1" height="21" fill="#a0a0a0"/><rect x="949" y="0" width="1" height="21" fill="#fff"/>
<use href="#grip" x="952"/><use href="#grip" x="956"/>
<!-- text style -->
<g transform="translate(966,2)"><path d="M1 13L6 1l5 12M3 9h6" fill="none" stroke="#222" stroke-width="1.500"/><path d="M14 6l-5 7" stroke="#c8834a" stroke-width="2"/><path d="M9.500 12.500l-2.500 3.500 4-1z" fill="#222"/></g>
<path d="M989 0h94q2 0 2 2v16q0 2-2 2h-94q-2 0-2-2V2q0-2 2-2z" fill="#fff"/>
<text x="991" y="13" class="ser" font-size="12" fill="#000" textLength="48" lengthAdjust="spacing">Standard</text>
<path d="M1073.500 8h7l-3.500 4z" fill="#9a9a9a"/>
<rect x="1088" y="1" width="1" height="19" fill="#555"/>
<path d="M1093 14.500h12M1093 11.500v6" stroke="#111" stroke-width="1.200"/><path d="M1094 14.500l6-3v6z" fill="#111"/><path d="M1099 12l6-4v6z" fill="#333"/>
</svg>

</div>
<div id="tabs">
<svg width="1105" height="16" viewBox="0 0 1105 16">
<rect x="0" y="0" width="7" height="14" fill="#e9e9e9"/><rect x="7" y="0" width="1" height="14" fill="#9a9a9a"/><rect x="0" y="8" width="3" height="1" fill="#000"/><rect x="3" y="3" width="1" height="10" fill="#000"/>
<path d="M11.500 0L16 14H45.500L50 0z" fill="#000"/>
<path d="M11 0L15.500 14" stroke="#555" stroke-width="1" fill="none"/>
<path d="M46 14L50.500 0" stroke="#e8e8e8" stroke-width="1" fill="none"/>
<text x="19" y="11.500" font-family="Liberation Sans,Noto Sans CJK SC,sans-serif" font-size="12" fill="#fff" textLength="23">模型</text>
<path d="M51 0L53 13.500H100L104 0z" fill="#fbfbfb" stroke="#000" stroke-width="1"/>
<path d="M105 0L107 13.500H154L158 0z" fill="#fbfbfb" stroke="#000" stroke-width="1"/>
<rect x="51.500" y="-1" width="107" height="1.500" fill="#fbfbfb"/>
<path d="M53 14.500H101M107 14.500H155" stroke="#000" stroke-width="1"/>
<text x="55.500" y="11" font-family="Liberation Serif,serif" font-size="12" font-weight="bold" fill="#000" textLength="41" lengthAdjust="spacing">Layout1</text>
<text x="110" y="11" font-family="Liberation Serif,serif" font-size="12" font-weight="bold" fill="#000" textLength="41" lengthAdjust="spacing">Layout2</text>
<rect x="0" y="15" width="1105" height="1" fill="#e3e3e3"/>
</svg>

</div>
</body></html>
